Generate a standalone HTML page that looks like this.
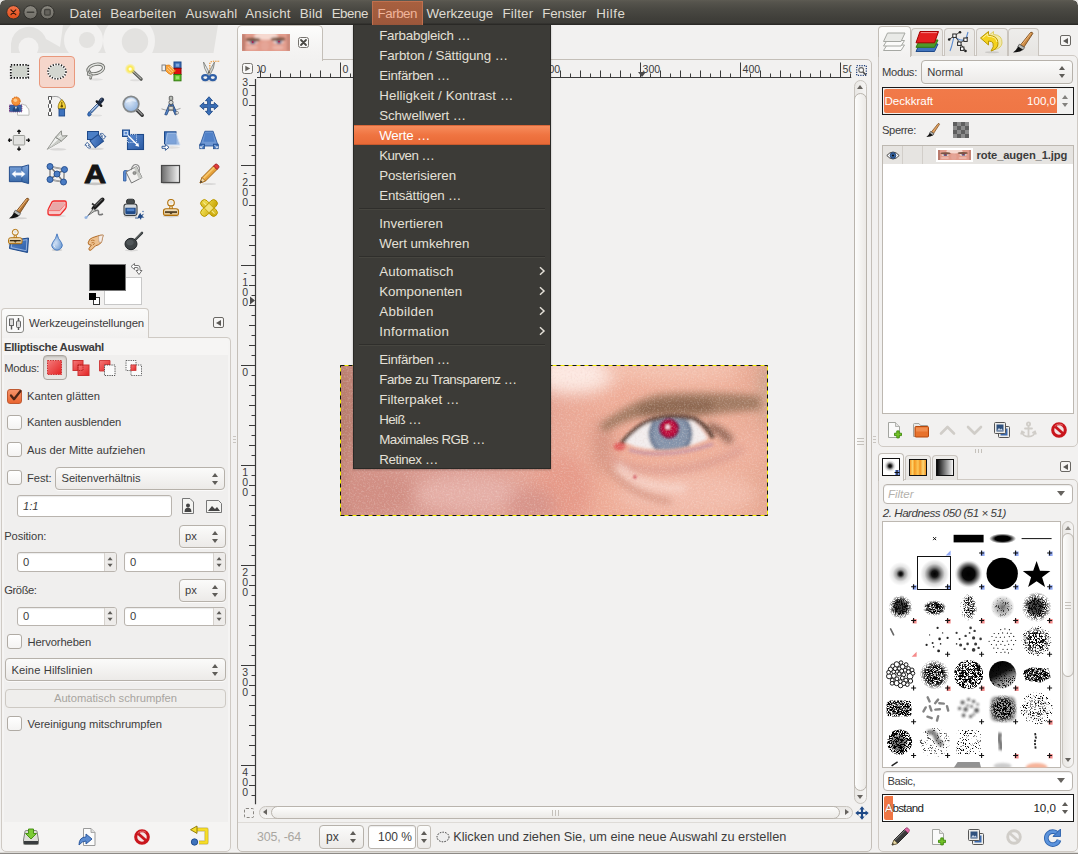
<!DOCTYPE html>
<html lang="de">
<head>
<meta charset="utf-8">
<title>GIMP – rote_augen_1.jpg</title>
<style>
*{box-sizing:border-box;margin:0;padding:0}
html,body{width:1078px;height:854px;overflow:hidden;background:#f2f1f0}
body{position:relative;font-family:"Liberation Sans","DejaVu Sans",sans-serif;font-size:11.2px;color:#3c3c3c;-webkit-font-smoothing:antialiased}
.a{position:absolute}
.t{position:absolute;white-space:nowrap;line-height:16px;height:16px}
.m{position:absolute;white-space:nowrap;font-size:13.33px;line-height:18px;height:18px;color:#dfdbd2}
svg{position:absolute;overflow:visible}
.combo{position:absolute;border:1px solid #b6b1aa;border-radius:4px;background:linear-gradient(#fbfbfa,#eceae8);box-shadow:0 1px 0 rgba(255,255,255,.7)}
.entry{position:absolute;border:1px solid #b9b4ae;border-radius:3px;background:#fff;box-shadow:inset 0 1px 1px rgba(0,0,0,.08)}
.cb{position:absolute;width:15px;height:15px;border:1px solid #b0aba4;border-radius:3px;background:linear-gradient(#fff,#f4f3f2)}
.mb{position:absolute;width:11px;height:11px;border:1px solid #6a6864;border-radius:2px;background:#f6f5f4}
.mb:after{content:"";position:absolute;left:2px;top:1.5px;border-right:5px solid #5a5855;border-top:3px solid transparent;border-bottom:3px solid transparent}
.ud:before,.ud:after{content:"";position:absolute;left:0;border-left:3.5px solid transparent;border-right:3.5px solid transparent}
.ud:before{top:0;border-bottom:4px solid #5e5c58}
.ud:after{top:8px;border-top:4px solid #5e5c58}
.ud{position:absolute;width:7px;height:12px}
.tab{position:absolute;border:1px solid #c9c4be;border-bottom:none;border-radius:4px 4px 0 0;background:linear-gradient(#eeedeb,#e6e4e1)}
.tab.on{background:linear-gradient(#fbfbfa,#f2f1f0);border-color:#c2bdb6}
</style>
</head>
<body>
<!-- title / menu bar -->
<div class="a" id="titlebar" style="left:0;top:0;width:1078px;height:25px;background:linear-gradient(#5d5b53 0,#56544d 2px,#4a4943 9px,#403f3a 18px,#3c3b37 23px,#2b2a27 24px,#2b2a27 25px);border-radius:5px 5px 0 0"></div>
<div class="a" style="left:0;top:0;width:5px;height:5px;background:radial-gradient(circle at 5px 5px,transparent 4.3px,#e6e5e3 5.2px)"></div>
<div class="a" style="left:1073px;top:0;width:5px;height:5px;background:radial-gradient(circle at 0 5px,transparent 4.3px,#e6e5e3 5.2px)"></div>
<svg style="left:4px;top:4px" width="56" height="18" viewBox="0 0 56 18">
  <defs>
    <linearGradient id="gclose" x1="0" y1="0" x2="0" y2="1"><stop offset="0" stop-color="#f4744a"/><stop offset="1" stop-color="#df4d19"/></linearGradient>
    <linearGradient id="gbtn" x1="0" y1="0" x2="0" y2="1"><stop offset="0" stop-color="#8a8880"/><stop offset="1" stop-color="#706e67"/></linearGradient>
  </defs>
  <circle cx="9.400" cy="8.300" r="6.700" fill="url(#gclose)" stroke="#33302b" stroke-width="1"/>
  <path d="M7 5.900 L11.800 10.700 M11.800 5.900 L7 10.700" stroke="#3d1a0c" stroke-width="1.200" stroke-linecap="round"/>
  <circle cx="26.500" cy="8.300" r="6.700" fill="url(#gbtn)" stroke="#2f2e2a" stroke-width="1"/>
  <path d="M23.300 8.300 H29.700" stroke="#3f3e39" stroke-width="1.500" stroke-linecap="round"/>
  <circle cx="43.400" cy="8.300" r="6.700" fill="url(#gbtn)" stroke="#2f2e2a" stroke-width="1"/>
  <rect x="40.600" y="5.500" width="5.600" height="5.600" rx="1" fill="#64625c" stroke="#45443f" stroke-width="1.300"/>
</svg>
<div class="a" style="left:372px;top:1px;width:51px;height:25px;background:linear-gradient(#a8603f,#9c573b);border:1px solid #c0704e"></div>
<span class="m" id="m0" style="left:69.6px;top:5px;letter-spacing:0.12px">Datei</span>
<span class="m" id="m1" style="left:110.2px;top:5px;letter-spacing:0.17px">Bearbeiten</span>
<span class="m" id="m2" style="left:185.4px;top:5px;letter-spacing:0.25px">Auswahl</span>
<span class="m" id="m3" style="left:245.2px;top:5px;letter-spacing:0.28px">Ansicht</span>
<span class="m" id="m4" style="left:299.8px;top:5px;letter-spacing:0.16px">Bild</span>
<span class="m" id="m5" style="left:331.7px;top:5px;letter-spacing:-0.46px">Ebene</span>
<span class="m" id="m6" style="left:377.6px;top:5px;color:#f0b49a;letter-spacing:-0.47px">Farben</span>
<span class="m" id="m7" style="left:426.6px;top:5px;letter-spacing:-0.06px">Werkzeuge</span>
<span class="m" id="m8" style="left:502.4px;top:5px;letter-spacing:0.24px">Filter</span>
<span class="m" id="m9" style="left:542.3px;top:5px;letter-spacing:-0.21px">Fenster</span>
<span class="m" id="m10" style="left:596.2px;top:5px;letter-spacing:0.51px">Hilfe</span>
<!-- toolbox: wilber strip -->
<svg style="left:11px;top:25px" width="207" height="28" viewBox="11 25 207 28">
  <defs><clipPath id="wclip"><path d="M11 25 H218 L213.5 53 H11 Z"/></clipPath></defs>
  <g clip-path="url(#wclip)">
    <path d="M11 53 V46 A18 18 0 0 1 46 39 L60 47 L63 25 H218 V53 Z" fill="#e3e2e0"/>
    <circle cx="28.5" cy="47.5" r="10" fill="#f2f1f0"/>
    <circle cx="83.5" cy="40" r="19.5" fill="#f2f1f0"/>
    <circle cx="87" cy="40" r="8" fill="#e3e2e0"/>
    <circle cx="129" cy="41" r="26" fill="#f2f1f0"/>
    <circle cx="135" cy="41.5" r="13.2" fill="#e3e2e0"/>
  </g>
</svg>
<!-- selected tool highlight -->
<div class="a" style="left:39px;top:56px;width:36px;height:32px;border:1px solid #e9987c;border-radius:4px;background:#f5d6cb"></div>
<!-- tool icons -->
<svg width="0" height="0" style="left:0;top:0"><defs>
<linearGradient id="gBlue" x1="0" y1="0" x2="1" y2="1"><stop offset="0" stop-color="#5b8bd0"/><stop offset="1" stop-color="#2a5aa3"/></linearGradient>
<linearGradient id="gBlueV" x1="0" y1="0" x2="0" y2="1"><stop offset="0" stop-color="#7ba3db"/><stop offset="1" stop-color="#3465a4"/></linearGradient>
<linearGradient id="gGrey" x1="0" y1="0" x2="1" y2="1"><stop offset="0" stop-color="#eeeeec"/><stop offset="1" stop-color="#a5a7a2"/></linearGradient>
<linearGradient id="gBlend" x1="0" y1="0" x2="1" y2="0"><stop offset="0" stop-color="#6a6a6a"/><stop offset="1" stop-color="#f4f4f4"/></linearGradient>
<linearGradient id="gWood" x1="0" y1="0" x2="1" y2="1"><stop offset="0" stop-color="#d9934a"/><stop offset="1" stop-color="#8f5a22"/></linearGradient>
<linearGradient id="gPink" x1="0" y1="0" x2="0" y2="1"><stop offset="0" stop-color="#f9b9b9"/><stop offset="1" stop-color="#ee8a8a"/></linearGradient>
<radialGradient id="gLens" cx="40%" cy="35%" r="70%"><stop offset="0" stop-color="#dbe7f6"/><stop offset="1" stop-color="#8fb2de"/></radialGradient>
<radialGradient id="gDrop" cx="40%" cy="55%" r="60%"><stop offset="0" stop-color="#cfe0f5"/><stop offset="1" stop-color="#6f9bd1"/></radialGradient>
<radialGradient id="gGlow" cx="50%" cy="50%" r="50%"><stop offset="0" stop-color="#fff9b0"/><stop offset=".45" stop-color="#fce94f"/><stop offset="1" stop-color="#fce94f" stop-opacity="0"/></radialGradient>
<linearGradient id="gYel" x1="0" y1="0" x2="1" y2="1"><stop offset="0" stop-color="#f5e35a"/><stop offset="1" stop-color="#c4a000"/></linearGradient>
<linearGradient id="gTan" x1="0" y1="0" x2="0" y2="1"><stop offset="0" stop-color="#f5e6c8"/><stop offset="1" stop-color="#d9b980"/></linearGradient>
<filter id="fsh" x="-30%" y="-30%" width="160%" height="160%"><feGaussianBlur stdDeviation="0.9"/></filter>
</defs></svg>

<svg style="left:7.0px;top:59.0px" width="24" height="24" viewBox="0 0 24 24"><rect x="4" y="6" width="17" height="12.500" fill="#cfd3cc"/><rect x="3.800" y="5.800" width="17.400" height="13" fill="none" stroke="#fff" stroke-width="1.800"/><rect x="3.800" y="5.800" width="17.400" height="13" fill="none" stroke="#111" stroke-width="1.800" stroke-dasharray="1.450 1.450"/></svg>
<svg style="left:44.5px;top:59.0px" width="24" height="24" viewBox="0 0 24 24"><ellipse cx="12" cy="12.600" rx="8.600" ry="6.800" fill="#d3d6d0"/><ellipse cx="12" cy="12.600" rx="9" ry="7.200" fill="none" stroke="#fff" stroke-width="1.900"/><ellipse cx="12" cy="12.600" rx="9" ry="7.200" fill="none" stroke="#222" stroke-width="1.700" stroke-dasharray="1.300 1.500"/></svg>
<svg style="left:82.7px;top:59.0px" width="24" height="24" viewBox="0 0 24 24"><g transform="rotate(-14 12.5 10)"><ellipse cx="12.800" cy="10" rx="8" ry="4.600" fill="none" stroke="#6f716c" stroke-width="3.200"/><ellipse cx="12.800" cy="10" rx="8" ry="4.600" fill="none" stroke="#e3e4e1" stroke-width="1.400"/></g><path d="M6.500 12.500 L5.200 15.500 L8.300 15.800 L7.600 19.300" fill="none" stroke="#6f716c" stroke-width="2.600" stroke-linejoin="round" stroke-linecap="round"/><path d="M6.500 12.500 L5.200 15.500 L8.300 15.800 L7.600 19.300" fill="none" stroke="#dcddda" stroke-width="1" stroke-linejoin="round"/><ellipse cx="13" cy="20.500" rx="7" ry="1.200" fill="#000" opacity=".07"/></svg>
<svg style="left:121.0px;top:59.0px" width="24" height="24" viewBox="0 0 24 24"><path d="M11 11.500 L20.200 20.200" stroke="#4a4c48" stroke-width="3" stroke-linecap="round"/><path d="M11 11.300 L20 19.800" stroke="#a9aba6" stroke-width="1.200" stroke-linecap="round"/><circle cx="9.200" cy="10" r="5.600" fill="url(#gGlow)"/><circle cx="9.200" cy="10" r="1.500" fill="#fffde0"/><ellipse cx="15" cy="21.300" rx="6" ry="1" fill="#000" opacity=".08"/></svg>
<svg style="left:159.0px;top:59.0px" width="24" height="24" viewBox="0 0 24 24"><rect x="15" y="3" width="7" height="6.300" fill="#3b6fb8" stroke="#1e4a8a" stroke-width="1"/><rect x="16.800" y="4.700" width="3.400" height="3" fill="#7ea6dc"/><rect x="15" y="9.300" width="7" height="6.200" fill="#dd1111" stroke="#8f0000" stroke-width="1"/><rect x="15" y="15.500" width="7" height="6.300" fill="#66c92e" stroke="#2f7a0c" stroke-width="1"/><rect x="16.800" y="17.200" width="3.400" height="3" fill="#9be56e"/><path d="M6.500 6.500 L10.500 6 L16.500 12 L12 15.500 L9.500 14.500 L6.500 11.500 Z" fill="#f9a33a" stroke="#e07a0a" stroke-width=".8"/><path d="M9 8 l5 5 M8 10 l4 4 M11 7 l4 4" stroke="#fcd9a0" stroke-width=".7"/><rect x="3" y="6" width="3.400" height="5.800" fill="#f4f4f4" stroke="#777" stroke-width=".9"/></svg>
<svg style="left:196.8px;top:59.0px" width="24" height="24" viewBox="0 0 24 24"><path d="M12.800 12 V5 Q13 2.500 16 2.200 H23" fill="none" stroke="#e98a1a" stroke-width="1.100" stroke-dasharray="1.300 1"/><path d="M6.500 3 Q9.500 8 12.800 14.500 L10.800 15.500 Q6.500 9 6.500 3 Z" fill="#e6e7e4" stroke="#777974" stroke-width=".8"/><path d="M17.500 3 Q14.500 8 11.200 14.500 L13.200 15.500 Q17.500 9 17.500 3 Z" fill="#cfd1cc" stroke="#777974" stroke-width=".8"/><circle cx="12" cy="13.200" r=".9" fill="#555"/><ellipse cx="8.300" cy="18.600" rx="3.100" ry="2.500" fill="none" stroke="#2f5fa6" stroke-width="2.200"/><ellipse cx="15.800" cy="18.600" rx="3.100" ry="2.500" fill="none" stroke="#2f5fa6" stroke-width="2.200"/><ellipse cx="12" cy="22.300" rx="7.500" ry=".9" fill="#000" opacity=".08"/></svg>
<svg style="left:7.0px;top:93.5px" width="24" height="24" viewBox="0 0 24 24"><path d="M10.500 14 Q10.500 10.800 13.500 10.800 Q15 9.300 17 10.800 Q19.800 10.500 20 13.500 Q22.200 14 22 17 V21.200 H10.500 Z" fill="#fdfdfd" stroke="#b5b7b2" stroke-width=".9"/><rect x="2.500" y="11" width="12.300" height="6.800" fill="#3465a4" stroke="#75307a" stroke-width="1" stroke-dasharray="1.100 .8"/><path d="M5.500 17.500 q0 -5 3.400 -5 q3.400 0 3.400 5 z" fill="#23477d"/><path d="M7.800 12.800 l1.100 2.600 l1.100 -2.600 z" fill="#e6e6e6"/><circle cx="9" cy="7.200" r="4.200" fill="#f5923a" stroke="#ce5c00" stroke-width="1" stroke-dasharray="1.200 .7"/><circle cx="8.400" cy="6.300" r="1.800" fill="#fcc98a"/></svg>
<svg style="left:44.5px;top:93.5px" width="24" height="24" viewBox="0 0 24 24"><path d="M6 3 C12 1.5 16 3 17 8" fill="none" stroke="#999" stroke-width="1"/><path d="M3.5 2.5 h3 v3 l-1 1 v3 l1 1 v3 l-1 1 v3 l1 1 v3 h-3 v-3 l1 -1 v-3 l-1 -1 v-3 l1 -1 v-3 l-1 -1 z" fill="#fff" stroke="#444" stroke-width=".9"/><path d="M16.8 5.5 C20 9 21 12 20 15 H13.6 C12.6 12 13.6 9 16.8 5.5 Z" fill="#f4d23a" stroke="#8a6d00" stroke-width=".9"/><path d="M16.8 8 V13" stroke="#6b5200" stroke-width=".9"/><circle cx="16.8" cy="12.3" r="1.2" fill="#6b5200"/><rect x="14" y="15" width="5.6" height="7" fill="#3f73bd" stroke="#1f4a8a" stroke-width=".9"/></svg>
<svg style="left:82.7px;top:93.5px" width="24" height="24" viewBox="0 0 24 24"><path d="M7 17.300 L15 9 L16.600 10.600 L8.600 18.900 Z" fill="#6c97cf" stroke="#23477d" stroke-width=".9"/><path d="M8.600 16.800 L15 10.200" stroke="#e6eefa" stroke-width=".9"/><path d="M13.800 7.400 L18.200 11.800" stroke="#1b1b1b" stroke-width="2.400" stroke-linecap="round"/><path d="M16.200 9 L19 5.600" stroke="#1d2b42" stroke-width="4.200" stroke-linecap="round"/><path d="M17.300 6.300 L18.700 4.800" stroke="#51648a" stroke-width="1.200" stroke-linecap="round"/><path d="M6.200 17.600 q-2.600 2.800 -1 4.300 q1.800 1.200 3.200 -1.800 z" fill="#3b73c2" stroke="#1d4684" stroke-width=".7"/><ellipse cx="13" cy="21.500" rx="6" ry="1" fill="#000" opacity=".07"/></svg>
<svg style="left:121.0px;top:93.5px" width="24" height="24" viewBox="0 0 24 24"><g transform="translate(12 12) scale(0.97) translate(-12 -12)"><path d="M15.5 15.5 L21.5 21.5" stroke="#3b3b3b" stroke-width="3.6" stroke-linecap="round"/><path d="M16 15.6 L21.3 20.9" stroke="#9a9a9a" stroke-width="1.2" stroke-linecap="round"/><circle cx="10" cy="10" r="8" fill="url(#gLens)" stroke="#84888a" stroke-width="1.8"/><path d="M4.5 9 a5.6 5.6 0 0 1 10.8 -1.2 q-5.5 -1.8 -10.8 1.2z" fill="#fff" opacity=".55"/></g></svg>
<svg style="left:159.0px;top:93.5px" width="24" height="24" viewBox="0 0 24 24"><g transform="translate(12 12) scale(0.95) translate(-12 -12)"><path d="M2 15 Q12 19 22 14.5" fill="none" stroke="#888" stroke-width=".8"/><path d="M12 5.5 L5.5 21 L7.5 21.5 L12.6 10 Z" fill="#5b8bd0" stroke="#23477d" stroke-width=".9"/><path d="M12 5.5 L18.5 20 L16.5 21.5 L11.4 10 Z" fill="#3f73bd" stroke="#23477d" stroke-width=".9"/><rect x="10.2" y="1.8" width="3.6" height="4.2" rx=".8" fill="#b9bdb6" stroke="#555" stroke-width=".9"/><circle cx="12" cy="8.3" r="2.2" fill="#d9dbd6" stroke="#555" stroke-width=".9"/><rect x="9.6" y="12.3" width="4.8" height="3.8" rx=".8" fill="#d9dbd6" stroke="#555" stroke-width=".9"/><circle cx="18.4" cy="19.2" r="1.5" fill="#eee" stroke="#666" stroke-width=".7"/></g></svg>
<svg style="left:196.8px;top:93.5px" width="24" height="24" viewBox="0 0 24 24"><g transform="translate(12 12) scale(0.88) translate(-12 -12)"><path d="M12 1.5 L16 6 H13.6 V10.4 H18 V8 L22.5 12 L18 16 V13.6 H13.6 V18 H16 L12 22.5 L8 18 H10.4 V13.6 H6 V16 L1.5 12 L6 8 V10.4 H10.4 V6 H8 Z" fill="#3a6fb7" stroke="#1f4a8a" stroke-width="1" stroke-linejoin="round"/></g></svg>
<svg style="left:7.0px;top:127.5px" width="24" height="24" viewBox="0 0 24 24"><rect x="6.300" y="7.500" width="11.400" height="9.500" rx=".8" fill="#e2e2e0" stroke="#9a9c97" stroke-width="1"/><path d="M12 6 V2.800 M12 18.500 V21.700 M5 12.200 H1.800 M19 12.200 H22.200" stroke="#111" stroke-width="1.300"/><path d="M10.200 3.400 h3.600 M10.200 21.100 h3.600 M2.400 10.400 v3.600 M21.600 10.400 v3.600" stroke="#111" stroke-width="1.300"/><path d="M12 1.200 l1.900 2.400 h-3.800z M12 23.200 l1.900 -2.400 h-3.800z M.7 12.200 l2.400 -1.900 v3.800z M23.300 12.200 l-2.400 -1.900 v3.800z" fill="#111"/></svg>
<svg style="left:44.5px;top:127.5px" width="24" height="24" viewBox="0 0 24 24"><ellipse cx="13" cy="21.300" rx="8.500" ry="1.200" fill="#000" opacity=".1"/><path d="M2.300 21.300 L10.500 9.300 L16.500 13 Z" fill="#f1f2f0" stroke="#8c8e89" stroke-width=".9" stroke-linejoin="round"/><path d="M2.300 21.300 L16.500 13 L13.500 11.200 Z" fill="#c9cbc6"/><path d="M10.500 9.300 L16.300 2.800 L16.800 8 L22.300 7.700 L16.500 13 Z" fill="#d6d8d3" stroke="#80827d" stroke-width=".9" stroke-linejoin="round"/><path d="M13.500 9.500 q2.500 -2.600 3.300 -1.500" fill="none" stroke="#fff" stroke-width="1"/></svg>
<svg style="left:82.7px;top:127.5px" width="24" height="24" viewBox="0 0 24 24"><ellipse cx="13" cy="20.800" rx="8" ry="1.200" fill="#000" opacity=".1"/><rect x="4.500" y="3.500" width="11" height="8" fill="#4b7fc6" stroke="#1f4a8a" stroke-width="1"/><rect x="8.500" y="8.800" width="10.500" height="8.500" fill="url(#gBlue)" stroke="#1f4a8a" stroke-width="1" transform="rotate(-38 13.700 13)"/><path d="M17.200 5.700 a3 3 0 0 1 4.300 2.600 l1.400 0 l-2.300 2.900 l-2.500 -2.900 h1.500 a1.500 1.500 0 0 0 -2.200 -1.200z" fill="#fff" stroke="#1f4a8a" stroke-width=".8"/><path d="M7.600 19.800 a3 3 0 0 1 -4.300 -2.600 l-1.400 0 l2.300 -2.900 l2.500 2.900 h-1.500 a1.500 1.500 0 0 0 2.200 1.200z" fill="#fff" stroke="#1f4a8a" stroke-width=".8"/></svg>
<svg style="left:121.0px;top:127.5px" width="24" height="24" viewBox="0 0 24 24"><rect x="6.5" y="6.5" width="16" height="15" fill="url(#gBlue)" stroke="#1f4a8a" stroke-width="1.1"/><rect x="6.5" y="6.5" width="9" height="8" fill="none" stroke="#c7d9f2" stroke-width=".9" stroke-dasharray="1.2 1"/><rect x="1.5" y="2" width="7" height="6.5" fill="#5b8bd0" stroke="#1f4a8a" stroke-width="1"/><rect x="3.2" y="3.6" width="3.4" height="3.2" fill="none" stroke="#dbe7f6" stroke-width=".8"/><path d="M7 7.5 L16.5 17" stroke="#fff" stroke-width="1.4"/><path d="M18.2 18.7 l-1 -4 l-3 3z" fill="#fff"/></svg>
<svg style="left:159.0px;top:127.5px" width="24" height="24" viewBox="0 0 24 24"><ellipse cx="13" cy="19.500" rx="8" ry="1.200" fill="#000" opacity=".08"/><rect x="5.500" y="3.800" width="11.500" height="12" fill="#3f73bd" stroke="#1f4a8a" stroke-width="1"/><path d="M8.300 5.200 H17.200 L21 17 H6.500 Z" fill="#8db0e0" stroke="#c9dbf3" stroke-width=".9" opacity=".8"/><path d="M3 18.300 h3.400 v-2 l3.600 3 l-3.600 3 v-2 h-3.400z" fill="#fff" stroke="#1f4a8a" stroke-width=".9" stroke-linejoin="round"/></svg>
<svg style="left:196.8px;top:127.5px" width="24" height="24" viewBox="0 0 24 24"><g transform="translate(12 12) scale(0.92) translate(-12 -12)"><path d="M7.5 2.5 H16.5 L22 18.5 H2 Z" fill="#6f98d4" stroke="#2d5aa0" stroke-width="1"/><path d="M8 4 H16 L18 14 H6 Z" fill="#4a7cc4" opacity=".8"/><rect x="2" y="16.5" width="5" height="5" fill="#3f73bd" stroke="#1f4a8a" stroke-width=".8"/><rect x="17" y="16.5" width="5" height="5" fill="#3f73bd" stroke="#1f4a8a" stroke-width=".8"/><path d="M3 20.5 l2.8 -2.8 M3 20.5 v-1.8 M3 20.5 h1.8 M21 20.5 l-2.8 -2.8 M21 20.5 v-1.8 M21 20.5 h-1.8" stroke="#fff" stroke-width=".9" fill="none"/></g></svg>
<svg style="left:7.0px;top:162.0px" width="24" height="24" viewBox="0 0 24 24"><g transform="translate(12 12) scale(0.96) translate(-12 -12)"><path d="M2 4.5 H15 L22 2.5 V22 L15 20 H2 Z" fill="url(#gBlueV)" stroke="#1f4a8a" stroke-width="1"/><path d="M15 4.5 V20" stroke="#1f4a8a" stroke-width=".8"/><path d="M4.5 12 l4 -3.3 v2.1 h6 v-2.1 l4 3.3 l-4 3.3 v-2.1 h-6 v2.1z" fill="#fff" stroke="#c7d9f2" stroke-width=".5"/></g></svg>
<svg style="left:44.5px;top:162.0px" width="24" height="24" viewBox="0 0 24 24"><path d="M5 4.5 L19.5 7.5 L18.5 20 L5 17.5 Z M5 4.5 L12 12 L19.5 7.5 M5 17.5 L12 12 L18.5 20" fill="none" stroke="#777" stroke-width="1.6"/><path d="M5 4.5 L19.5 7.5 L18.5 20 L5 17.5 Z" fill="none" stroke="#ddd" stroke-width=".6"/><g fill="#4a7cc4" stroke="#1f4a8a" stroke-width=".9"><circle cx="5" cy="4.5" r="3"/><circle cx="19.5" cy="7.5" r="3"/><circle cx="12" cy="12" r="3"/><circle cx="5" cy="17.5" r="3"/><circle cx="18.5" cy="20" r="3"/></g></svg>
<svg style="left:82.7px;top:162.0px" width="24" height="24" viewBox="0 0 24 24"><ellipse cx="12" cy="21.800" rx="10.500" ry="1.400" fill="#000" opacity=".18"/><g transform="translate(12 0) scale(1.160 1) translate(-12 0)"><text x="12" y="21" text-anchor="middle" font-family="Liberation Sans,DejaVu Sans,sans-serif" font-weight="bold" font-size="26.500" fill="#151515" stroke="#151515" stroke-width=".9">A</text></g></svg>
<svg style="left:121.0px;top:162.0px" width="24" height="24" viewBox="0 0 24 24"><path d="M2.5 19 V10 Q2.5 8 5 8.5 L9 9.5 V12 L5 11 V19 Z" fill="#5b8bd0" stroke="#2d5aa0" stroke-width=".8"/><path d="M5 10 L15.5 4.5 L21 15.5 L10.5 21 Z" fill="#f2f2f0" stroke="#777" stroke-width="1"/><path d="M15.5 4.5 L21 15.5 L18 17 L13 6 Z" fill="#c9cbc6"/><path d="M10 8 Q12 1 16.5 3 Q19.5 5 17.8 10" fill="none" stroke="#888" stroke-width="1.1"/><circle cx="13.5" cy="11" r="1.6" fill="#9a9c97" stroke="#666" stroke-width=".6"/></svg>
<svg style="left:159.0px;top:162.0px" width="24" height="24" viewBox="0 0 24 24"><rect x="2.5" y="3.5" width="18" height="17" fill="url(#gBlend)" stroke="#4a4a4a" stroke-width="1.2"/><rect x="3.5" y="21" width="17" height="1.2" fill="#000" opacity=".15"/></svg>
<svg style="left:196.8px;top:162.0px" width="24" height="24" viewBox="0 0 24 24"><path d="M3 21 L5 15.5 L16.5 4 L20 7.5 L8.5 19 Z" fill="#e6a13a" stroke="#9b5d0f" stroke-width=".9"/><path d="M6 15.5 L17.3 4.3 L18.5 5.6 L7 17 Z" fill="#f7c66a"/><path d="M3 21 L5 15.5 L8.5 19 Z" fill="#f0d7a8" stroke="#9b5d0f" stroke-width=".7"/><path d="M3 21 L3.9 18.6 L5.4 20.1 Z" fill="#333"/><path d="M16.5 4 L18.2 2.3 Q19.3 1.5 20.6 2.7 L21.4 3.5 Q22.5 4.8 21.7 5.8 L20 7.5 Z" fill="#e23b3b" stroke="#8f0f0f" stroke-width=".8"/><ellipse cx="12" cy="22" rx="7" ry="1" fill="#000" opacity=".1"/></svg>
<svg style="left:7.0px;top:195.5px" width="24" height="24" viewBox="0 0 24 24"><path d="M9.5 15 L19.5 2.5 Q21.5 1.5 21.8 3.5 L13 17 Z" fill="url(#gWood)" stroke="#6e3f10" stroke-width=".8"/><path d="M11 14.5 L20 3.2" stroke="#f1b877" stroke-width="1"/><path d="M8.3 14.2 L13.6 17.6 L11.8 20 L6.8 16.8 Z" fill="#b9bbb6" stroke="#555" stroke-width=".8"/><path d="M7 16.5 L12 19.8 Q9 22.5 2 22.5 Q5.5 20 7 16.5 Z" fill="#111"/><ellipse cx="12" cy="22.3" rx="8" ry="1" fill="#000" opacity=".12"/></svg>
<svg style="left:44.5px;top:195.5px" width="24" height="24" viewBox="0 0 24 24"><ellipse cx="13" cy="20" rx="8" ry="1.200" fill="#000" opacity=".08"/><path d="M3 15.500 Q2.700 13.800 3.600 12.500 L6.800 6.200 Q7.500 5 9 5 H19.700 Q21.200 5 21.200 6.500 V10.500 Q21.200 12 20.200 13 L15.800 18.200 Q15 19 13.800 19 H5 Q3 19 3 17.200 Z" fill="#f8c9c9" stroke="#ef2929" stroke-width="1.300" stroke-linejoin="round"/><path d="M4.200 14.300 L7.600 6.800 Q7.900 6.200 8.800 6.200 H19.200 Q20 6.200 19.800 7 L15 14.500 Z" fill="#e9a7a7"/><path d="M3.800 14.600 H14.800 L20.300 8" fill="none" stroke="#f26a6a" stroke-width=".9"/></svg>
<svg style="left:82.7px;top:195.5px" width="24" height="24" viewBox="0 0 24 24"><path d="M10.5 12.5 L19.5 3.5" stroke="#1b1b1b" stroke-width="4" stroke-linecap="round"/><path d="M12 10 L19 3" stroke="#6a6a6a" stroke-width="1.1" stroke-linecap="round"/><path d="M5 19.5 L10.5 12.5 L12.5 14.5 Z" fill="#c9cbc6" stroke="#555" stroke-width=".8"/><path d="M9 7.5 L13 10.5" stroke="#333" stroke-width="1.6"/><path d="M12 15 Q16 13 15.5 17 Q15 20 20 18" fill="none" stroke="#777" stroke-width="1.6"/><path d="M2 22.5 L5 19 L5.8 19.8 Z" fill="#5b8bd0"/><circle cx="3" cy="21.5" r="1.6" fill="#7ba3db" opacity=".7"/></svg>
<svg style="left:121.0px;top:195.5px" width="24" height="24" viewBox="0 0 24 24"><ellipse cx="9.500" cy="20.300" rx="7" ry="1.200" fill="#000" opacity=".12"/><rect x="5.500" y="3.200" width="8" height="5" rx="2" fill="#43484a" stroke="#2a2d2e" stroke-width=".9"/><path d="M3 10.500 Q3 8 5.500 8 H13.500 Q16 8 16 10.500 V17 Q16 19.500 13.500 19.500 H5.500 Q3 19.500 3 17 Z" fill="#d6dadd" stroke="#3b3f41" stroke-width="1.100"/><path d="M4.300 11.800 H14.700 V16.800 Q14.700 18.300 13.200 18.300 H5.800 Q4.300 18.300 4.300 16.800 Z" fill="#204a87"/><rect x="5.800" y="12.600" width="7.500" height="2.600" fill="#4f82c8"/><path d="M17.500 19.500 l1.800 -2.800 l.9 2.400 l3 -1.600 l-2 2.600 l2.200 1.400 l-3 .3 l-.4 2.200 l-1.400 -2 l-2.700 .8 z" fill="#204a87"/><circle cx="15" cy="22" r=".8" fill="#204a87"/><circle cx="22" cy="15.500" r=".7" fill="#3465a4"/></svg>
<svg style="left:159.0px;top:195.5px" width="24" height="24" viewBox="0 0 24 24"><ellipse cx="12" cy="20.300" rx="8" ry="1.100" fill="#000" opacity=".12"/><circle cx="12" cy="6.800" r="3.300" fill="#fbf6e8" stroke="#b06f0a" stroke-width="1.100"/><circle cx="12" cy="6.300" r="1.500" fill="#ddd" opacity=".8"/><path d="M11 10 H13 L13.600 13 H10.400 Z" fill="#f3e3bb" stroke="#b06f0a" stroke-width=".9"/><path d="M4.500 15 Q4.500 12.800 7 12.800 H17 Q19.500 12.800 19.500 15 V17.800 Q19.500 19.400 18 19.400 H6 Q4.500 19.400 4.500 17.800 Z" fill="url(#gTan)" stroke="#b06f0a" stroke-width="1.100"/><rect x="6" y="15.300" width="12" height="1.500" fill="#3a2a10"/><path d="M10.300 16.800 h3.400 l-1.700 1.500z" fill="#3a2a10"/></svg>
<svg style="left:196.8px;top:195.5px" width="24" height="24" viewBox="0 0 24 24"><g transform="translate(12 12) scale(0.93) translate(-12 -12)"><g stroke="#b89600" stroke-width="1"><rect x="1" y="8" width="22" height="8" rx="4" fill="url(#gYel)" transform="rotate(45 12 12)"/><rect x="1" y="8" width="22" height="8" rx="4" fill="url(#gYel)" transform="rotate(-45 12 12)"/></g><rect x="8.4" y="8.4" width="7.2" height="7.2" fill="#f2e27a" stroke="#b89600" stroke-width=".7" transform="rotate(45 12 12)"/><path d="M6 6 L9 9 M15 15 L18 18" stroke="#fff4a8" stroke-width="1.2" opacity=".8"/></g></svg>
<svg style="left:7.0px;top:230.0px" width="24" height="24" viewBox="0 0 24 24"><path d="M3.500 10.500 L21.500 8 L20.500 22.500 L2.500 18.500 Z" fill="url(#gBlue)" stroke="#1f4a8a" stroke-width="1" stroke-linejoin="round"/><path d="M5 11.800 L20 9.700 L19.200 20.700 L4.200 17.500 Z" fill="none" stroke="#a9c3ea" stroke-width=".8"/><g transform="translate(-2.500,-3.800) scale(.9)"><ellipse cx="12" cy="20.300" rx="8" ry="1.100" fill="#000" opacity=".12"/><circle cx="12" cy="6.800" r="3.300" fill="#fbf6e8" stroke="#b06f0a" stroke-width="1.100"/><circle cx="12" cy="6.300" r="1.500" fill="#ddd" opacity=".8"/><path d="M11 10 H13 L13.600 13 H10.400 Z" fill="#f3e3bb" stroke="#b06f0a" stroke-width=".9"/><path d="M4.500 15 Q4.500 12.800 7 12.800 H17 Q19.500 12.800 19.500 15 V17.800 Q19.500 19.400 18 19.400 H6 Q4.500 19.400 4.500 17.800 Z" fill="url(#gTan)" stroke="#b06f0a" stroke-width="1.100"/><rect x="6" y="15.300" width="12" height="1.500" fill="#3a2a10"/><path d="M10.300 16.800 h3.400 l-1.700 1.500z" fill="#3a2a10"/></g></svg>
<svg style="left:44.5px;top:230.0px" width="24" height="24" viewBox="0 0 24 24"><g transform="translate(12 12) scale(0.86) translate(-12 -12)"><ellipse cx="12" cy="21.3" rx="6" ry="1.2" fill="#000" opacity=".15"/><path d="M12 2.5 Q13 8 17 12.5 Q19.5 16 17 19 Q14.5 21.5 12 21.5 Q9.5 21.5 7 19 Q4.5 16 7 12.5 Q11 8 12 2.5 Z" fill="url(#gDrop)" stroke="#3f73bd" stroke-width="1"/><path d="M8.5 14 q-.8 3 1.5 4.5" fill="none" stroke="#fff" stroke-width="1.1" opacity=".8"/></g></svg>
<svg style="left:82.7px;top:230.0px" width="24" height="24" viewBox="0 0 24 24"><g transform="translate(12 12) scale(0.86) translate(-12 -12)"><path d="M4 13 Q5 8 9 7 L15 5 Q19 3.5 21.5 4 L19.5 12.5 Q16 16 12.5 16.5 L8 21 Q6 22.5 5 21 Q4.3 20 6 18 L7.8 15.5 Q4 16 4 13 Z" fill="#edc08e" stroke="#a65a0e" stroke-width="1"/><path d="M16 5 L21.5 4 L19.5 12.5 L16.5 12 Z" fill="#f5ece6" stroke="#b58a6a" stroke-width=".6"/><path d="M7.5 10.5 q2 -1.5 4 0 M8 13 q2 -1 3.5 .5 M9.5 15.5 l2 -1.5" fill="none" stroke="#a65a0e" stroke-width=".8"/></g></svg>
<svg style="left:121.0px;top:230.0px" width="24" height="24" viewBox="0 0 24 24"><ellipse cx="10.500" cy="20.300" rx="6.500" ry="1.100" fill="#000" opacity=".1"/><path d="M12.500 11.500 L21 2.800" stroke="#2e3436" stroke-width="2.400" stroke-linecap="round"/><path d="M13.500 10 L21 2.400" stroke="#9a9c98" stroke-width=".7"/><ellipse cx="10" cy="14" rx="6" ry="5.700" fill="#3f4446" stroke="#23272a" stroke-width="1"/><ellipse cx="9" cy="12.600" rx="3.600" ry="2.800" fill="#5a6062" opacity=".7"/></svg>
<!-- fg/bg colours -->
<div class="a" style="left:104px;top:277px;width:38px;height:28px;background:#fff;border:1px solid #c8c8c8"></div>
<div class="a" style="left:89px;top:264px;width:37px;height:27px;background:#000;border:1px solid #777"></div>
<div class="a" style="left:93px;top:297px;width:7px;height:8px;background:#fff;border:1px solid #333"></div>
<div class="a" style="left:89px;top:293px;width:7px;height:7px;background:#000"></div>
<svg style="left:129px;top:262px" width="14" height="14" viewBox="0 0 14 14"><path d="M2 4.5 L5.5 1.5 V3.5 H9 Q11 3.5 11 6 V8.5 H13 L10 12.5 L7 8.5 H9 V6 Q9 5.5 8.5 5.5 H5.5 V7.5 Z" fill="#fbfbfb" stroke="#666" stroke-width=".9" stroke-linejoin="round"/></svg>

<!-- tool options dock -->
<div class="a" style="left:1px;top:337px;width:230px;height:515px;border:1px solid #cfcac4;border-radius:0 4px 5px 5px;background:#f5f4f3"></div>
<div class="a" style="left:4px;top:339px;width:224px;height:483px;background:#f0efee"></div>
<div class="a" style="left:4px;top:339px;width:224px;height:16px;background:#f6f5f4"></div>
<div class="tab on" style="left:1px;top:308px;width:148px;height:30px;border-color:#cfcac4"></div>
<svg style="left:6px;top:315px" width="18" height="18" viewBox="0 0 18 18"><rect x=".5" y=".5" width="17" height="17" rx="2.5" fill="#fafafa" stroke="#8a8a86"/><rect x="3.5" y="4" width="4" height="6.5" fill="#ddd" stroke="#555" stroke-width=".9"/><rect x="4.8" y="10.5" width="1.4" height="4" fill="#555"/><rect x="10.5" y="6" width="4" height="6.5" rx="1" fill="#ddd" stroke="#555" stroke-width=".9"/><rect x="11.8" y="3" width="1.4" height="3" fill="#555"/><rect x="11.8" y="12.5" width="1.4" height="2.5" fill="#555"/></svg>
<span class="t" id="to_title" style="left:29.0px;top:315px;font-size:11.4px;letter-spacing:-0.15px">Werkzeugeinstellungen</span>
<div class="mb" style="left:213px;top:317px"></div>

<span class="t" id="to_name" style="left:4.0px;top:339px;font-weight:bold;font-size:11.4px;letter-spacing:-0.35px">Elliptische Auswahl</span>
<span class="t" id="to_modus" style="left:4.2px;top:360px;letter-spacing:-0.3px">Modus:</span>
<div class="a" style="left:43px;top:355px;width:24px;height:25px;border:1px solid #aaa59e;border-radius:4px;background:linear-gradient(#dddad6,#e9e7e4);box-shadow:inset 0 1px 2px rgba(0,0,0,.15)"></div>
<svg style="left:46px;top:359px" width="96" height="18" viewBox="0 0 96 18">
  <defs><linearGradient id="gRed" x1="0" y1="0" x2="1" y2="1"><stop offset="0" stop-color="#f47b7b"/><stop offset="1" stop-color="#e32222"/></linearGradient></defs>
  <rect x="1.5" y="1.5" width="14" height="14" fill="url(#gRed)" stroke="#c33" stroke-width="1" stroke-dasharray="1.5 1"/>
  <rect x="27" y="1.5" width="10" height="10" fill="url(#gRed)" stroke="#c33" stroke-width="1"/><rect x="32" y="6" width="11" height="10.5" fill="url(#gRed)" stroke="#c33" stroke-width="1"/><rect x="32" y="6" width="5" height="5.5" fill="none" stroke="#a11" stroke-width=".8" stroke-dasharray="1.2 1"/>
  <path d="M53.5 1.5 H64 V6 H58.5 V12 H53.5 Z" fill="url(#gRed)" stroke="#c33" stroke-width=".9"/><rect x="58.5" y="6" width="10.5" height="10.5" fill="#fafafa" stroke="#444" stroke-width=".9" stroke-dasharray="1.3 1"/>
  <rect x="80" y="1.5" width="10" height="10" fill="#fafafa" stroke="#555" stroke-width=".9" stroke-dasharray="1.3 1"/><rect x="85" y="6" width="10.5" height="10.5" fill="#fafafa" stroke="#555" stroke-width=".9" stroke-dasharray="1.3 1"/><rect x="85" y="6" width="5" height="5.5" fill="url(#gRed)" stroke="#c33" stroke-width=".8"/>
</svg>

<div class="cb" style="left:7px;top:389px;border-color:#bf5a32;background:linear-gradient(#f6936a,#e9652f)"></div>
<svg style="left:8px;top:386px" width="16" height="17" viewBox="0 0 16 17"><path d="M3 9.500 L6 13.200 L12.500 5" fill="none" stroke="#4d2415" stroke-width="2.300" stroke-linecap="round" stroke-linejoin="round"/></svg>
<span class="t" id="to_c1" style="left:27.0px;top:388px;letter-spacing:0.07px">Kanten glätten</span>
<div class="cb" style="left:7px;top:415px"></div>
<span class="t" id="to_c2" style="left:27.0px;top:414px;letter-spacing:-0.14px">Kanten ausblenden</span>
<div class="cb" style="left:7px;top:442px"></div>
<span class="t" id="to_c3" style="left:27.0px;top:442px;letter-spacing:0.03px">Aus der Mitte aufziehen</span>
<div class="cb" style="left:7px;top:470px"></div>
<span class="t" id="to_c4" style="left:27.0px;top:470px;letter-spacing:-0.07px">Fest:</span>
<div class="combo" style="left:55px;top:467px;width:170px;height:23px"></div>
<span class="t" id="to_sv" style="left:61.5px;top:470px;letter-spacing:-0.04px">Seitenverhältnis</span>
<div class="ud" style="left:212px;top:473px"></div>

<div class="entry" style="left:17px;top:495px;width:155px;height:22px"></div>
<span class="t" id="to_11" style="left:23px;top:498px;font-style:italic">1:1</span>
<svg style="left:181px;top:497px" width="42" height="18" viewBox="0 0 42 18">
  <path d="M1.5 1.5 H9 L12.5 5 V16.5 H1.5 Z" fill="#f4f4f2" stroke="#777" stroke-width="1"/><circle cx="7" cy="8.5" r="2" fill="#444"/><path d="M3.5 15 q0 -4.5 3.5 -4.5 q3.5 0 3.5 4.5z" fill="#444"/>
  <path d="M25.5 3.5 H37.5 L40.5 6.5 V15.5 H25.5 Z" fill="#f4f4f2" stroke="#777" stroke-width="1"/><path d="M27 14 l4 -5 l3 3 l2 -2 l3 4z" fill="#444"/>
</svg>

<span class="t" id="to_pos" style="left:4.2px;top:528px;letter-spacing:-0.09px">Position:</span>
<div class="combo" style="left:179px;top:525px;width:47px;height:23px"></div>
<span class="t" style="left:185px;top:528px">px</span>
<div class="ud" style="left:212px;top:531px"></div>

<div class="entry" style="left:17px;top:552px;width:100px;height:20px"></div>
<div class="a" style="left:104px;top:553px;width:12px;height:18px;background:#eeecea;border-left:1px solid #d6d2cd;border-radius:0 2px 2px 0"></div>
<div class="ud" style="left:107px;top:556px;transform:scale(.85)"></div>
<span class="t" style="left:23px;top:554px">0</span>
<div class="entry" style="left:124px;top:552px;width:102px;height:20px"></div>
<div class="a" style="left:213px;top:553px;width:12px;height:18px;background:#eeecea;border-left:1px solid #d6d2cd;border-radius:0 2px 2px 0"></div>
<div class="ud" style="left:216px;top:556px;transform:scale(.85)"></div>
<span class="t" style="left:130px;top:554px">0</span>

<span class="t" id="to_gr" style="left:4.3px;top:582px;letter-spacing:-0.43px">Größe:</span>
<div class="combo" style="left:179px;top:579px;width:47px;height:23px"></div>
<span class="t" style="left:185px;top:582px">px</span>
<div class="ud" style="left:212px;top:585px"></div>

<div class="entry" style="left:17px;top:607px;width:100px;height:19px"></div>
<div class="a" style="left:104px;top:608px;width:12px;height:17px;background:#eeecea;border-left:1px solid #d6d2cd;border-radius:0 2px 2px 0"></div>
<div class="ud" style="left:107px;top:610px;transform:scale(.85)"></div>
<span class="t" style="left:23px;top:608px">0</span>
<div class="entry" style="left:124px;top:607px;width:102px;height:19px"></div>
<div class="a" style="left:213px;top:608px;width:12px;height:17px;background:#eeecea;border-left:1px solid #d6d2cd;border-radius:0 2px 2px 0"></div>
<div class="ud" style="left:216px;top:610px;transform:scale(.85)"></div>
<span class="t" style="left:130px;top:608px">0</span>

<div class="cb" style="left:7px;top:634px"></div>
<span class="t" id="to_hv" style="left:27.4px;top:634px;letter-spacing:-0.09px">Hervorheben</span>
<div class="combo" style="left:5px;top:658px;width:221px;height:23px"></div>
<span class="t" id="to_kh" style="left:11.4px;top:662px;letter-spacing:0.1px">Keine Hilfslinien</span>
<div class="ud" style="left:212px;top:664px"></div>
<div class="a" style="left:5px;top:689px;width:221px;height:19px;border:1px solid #cdc9c3;border-radius:4px;background:#efeeec"></div>
<span class="t" id="to_as" style="left:5px;top:690px;width:221px;text-align:center;color:#a8a5a0">Automatisch schrumpfen</span>
<div class="cb" style="left:7px;top:716px"></div>
<span class="t" id="to_vm" style="left:27.4px;top:716px;letter-spacing:-0.04px">Vereinigung mitschrumpfen</span>

<!-- bottom icons -->
<svg style="left:22px;top:828px" width="18" height="18" viewBox="0 0 18 18"><path d="M1.500 12 L3 3.500 Q3.200 2.500 4.200 2.500 H13.800 Q14.800 2.500 15 3.500 L16.500 12 V15.500 Q16.500 16.500 15.500 16.500 H2.500 Q1.500 16.500 1.500 15.500 Z" fill="#deded9" stroke="#7d7f7a" stroke-width="1"/><rect x="2" y="13" width="14" height="3" fill="#3a3d3f"/><path d="M6.500 1 h5 v4.500 h3 l-5.500 5.500 l-5.500 -5.500 h3z" fill="#7ccb35" stroke="#3d8a0a" stroke-width=".9" stroke-linejoin="round"/></svg>
<svg style="left:77px;top:827px" width="20" height="20" viewBox="0 0 20 20"><path d="M6.5 1.5 H14 L18 5.5 V18.5 H6.5 Z" fill="#fbfbfb" stroke="#9a9a9a" stroke-width="1"/><path d="M14 1.5 V5.5 H18" fill="#ddd" stroke="#9a9a9a" stroke-width=".8"/><path d="M2 18 Q2 10 9 10 V7 L15 12 L9 17 V14 Q5 14 2 18 Z" fill="#5b8bd0" stroke="#2d5aa0" stroke-width="1" stroke-linejoin="round"/></svg>
<svg style="left:133px;top:828px" width="18" height="18" viewBox="0 0 20 20"><circle cx="10" cy="10" r="7" fill="#f4e4e4" stroke="#c9161d" stroke-width="3.4"/><path d="M5 5.5 L15 14.5" stroke="#c9161d" stroke-width="3.2"/><path d="M5.3 6 a6.5 6.5 0 0 1 9 -1.2" fill="none" stroke="#f08a8a" stroke-width="1" opacity=".8"/></svg>
<svg style="left:189px;top:826px" width="21" height="21" viewBox="0 0 21 21"><path d="M8 3.5 H17.5 V16.5 H10" fill="none" stroke="#e8c600" stroke-width="3.2" stroke-linejoin="round"/><path d="M8 3.5 H17.5 V16.5 H10" fill="none" stroke="#8a7400" stroke-width="4.4" stroke-linejoin="round" opacity=".35"/><path d="M8 3.5 H17.5 V16.5 H10" fill="none" stroke="#f6dd2a" stroke-width="2.6" stroke-linejoin="round"/><path d="M1.5 3.7 L8 0 V7.4 Z" fill="#f6dd2a" stroke="#8a7400" stroke-width=".9" stroke-linejoin="round"/><circle cx="5.5" cy="16" r="3.2" fill="#3f73bd" stroke="#1f4a8a" stroke-width=".9"/></svg>
<!-- canvas window -->
<div class="a" style="left:233px;top:436px;width:3px;height:7px;background:repeating-linear-gradient(#c9c5c0 0 1px,transparent 1px 3px)"></div>
<div class="a" style="left:237px;top:59px;width:635px;height:793px;border:1px solid #c4bfb8;border-radius:0 5px 5px 5px;background:#f2f1f0"></div>
<div class="a" style="left:237px;top:25px;width:86px;height:36px;border:1px solid #c4bfb8;border-bottom:none;border-radius:5px 5px 0 0;background:linear-gradient(#fdfdfc,#f5f4f3 60%,#f2f1f0)"></div>
<svg style="left:242px;top:34px" width="48" height="17" viewBox="0 0 48 17"><defs><filter id="tb" x="-10%" y="-10%" width="120%" height="120%"><feGaussianBlur stdDeviation=".800"/></filter><clipPath id="tc"><rect width="48" height="17"/></clipPath></defs><g clip-path="url(#tc)" id="thumbg"><rect width="48" height="17" fill="#e29c8c"/><g filter="url(#tb)"><ellipse cx="24" cy="2" rx="12" ry="4" fill="#f6d9d0"/><rect x="0" y="0" width="3" height="17" fill="#b97a6c"/><rect x="45" y="0" width="3" height="17" fill="#c58577"/><ellipse cx="10.500" cy="8.600" rx="5.200" ry="1.700" fill="#e9dcdc"/><ellipse cx="36.500" cy="8.200" rx="5.200" ry="1.700" fill="#e9dcdc"/><ellipse cx="10.700" cy="8.300" rx="2.700" ry="2" fill="#66688a"/><ellipse cx="37" cy="7.900" rx="2.700" ry="2" fill="#66688a"/><ellipse cx="11" cy="5.700" rx="7.500" ry="1.900" fill="#7c5644"/><ellipse cx="36" cy="5.200" rx="7.500" ry="1.900" fill="#7c5644"/><ellipse cx="10" cy="13.5" rx="6" ry="2" fill="#ecb5a8"/><ellipse cx="36" cy="13.5" rx="6" ry="2" fill="#ecb5a8"/><ellipse cx="23" cy="12" rx="4" ry="5" fill="#e5a597"/></g><circle cx="10.700" cy="8" r=".9" fill="#b01848"/><circle cx="37" cy="7.600" r=".9" fill="#b01848"/></g></svg>
<svg style="left:298px;top:37px" width="11" height="11" viewBox="0 0 11 11"><rect x=".5" y=".5" width="10" height="10" rx="2" fill="#f8f8f7" stroke="#77746f"/><path d="M3 3 L8 8 M8 3 L3 8" stroke="#4a4844" stroke-width="1.8" stroke-linecap="round"/></svg>
<svg style="left:242px;top:63px" width="11" height="11" viewBox="0 0 11 11"><rect x=".5" y=".5" width="10" height="10" rx="2" fill="#f8f8f7" stroke="#77746f"/><path d="M3.3 2.8 L8.2 5.5 L3.3 8.2 Z" fill="#66635f"/></svg>
<svg style="left:257px;top:61px" width="595" height="18" viewBox="257 61 595 18"><defs><clipPath id="hrc"><rect x="257" y="61" width="594.5" height="18"/></clipPath></defs><g clip-path="url(#hrc)"><path d="M257 77.5 H851.5" stroke="#3a3a3a" stroke-width="1.2"/><path d="M260.5 70.5 V77.5 M270.5 73.5 V77.5 M280.5 70.5 V77.5 M290.5 73.5 V77.5 M300.5 70.5 V77.5 M310.5 73.5 V77.5 M320.5 70.5 V77.5 M330.5 73.5 V77.5 M340.5 62.5 V77.5 M350.5 73.5 V77.5 M360.5 70.5 V77.5 M370.5 73.5 V77.5 M380.5 70.5 V77.5 M390.5 73.5 V77.5 M400.5 70.5 V77.5 M410.5 73.5 V77.5 M420.5 70.5 V77.5 M430.5 73.5 V77.5 M440.5 62.5 V77.5 M450.5 73.5 V77.5 M460.5 70.5 V77.5 M470.5 73.5 V77.5 M480.5 70.5 V77.5 M490.5 73.5 V77.5 M500.5 70.5 V77.5 M510.5 73.5 V77.5 M520.5 70.5 V77.5 M530.5 73.5 V77.5 M540.5 62.5 V77.5 M550.5 73.5 V77.5 M560.5 70.5 V77.5 M570.5 73.5 V77.5 M580.5 70.5 V77.5 M590.5 73.5 V77.5 M600.5 70.5 V77.5 M610.5 73.5 V77.5 M620.5 70.5 V77.5 M630.5 73.5 V77.5 M640.5 62.5 V77.5 M650.5 73.5 V77.5 M660.5 70.5 V77.5 M670.5 73.5 V77.5 M680.5 70.5 V77.5 M690.5 73.5 V77.5 M700.5 70.5 V77.5 M710.5 73.5 V77.5 M720.5 70.5 V77.5 M730.5 73.5 V77.5 M740.5 62.5 V77.5 M750.5 73.5 V77.5 M760.5 70.5 V77.5 M770.5 73.5 V77.5 M780.5 70.5 V77.5 M790.5 73.5 V77.5 M800.5 70.5 V77.5 M810.5 73.5 V77.5 M820.5 70.5 V77.5 M830.5 73.5 V77.5 M840.5 62.5 V77.5 M850.5 73.5 V77.5" stroke="#3a3a3a" stroke-width="1"/><text x="245.0" y="72.800" font-size="10.600" font-family="Liberation Sans,DejaVu Sans,sans-serif" fill="#3c3c3c">-100</text><text x="342.5" y="72.800" font-size="10.600" font-family="Liberation Sans,DejaVu Sans,sans-serif" fill="#3c3c3c">0</text><text x="442.5" y="72.800" font-size="10.600" font-family="Liberation Sans,DejaVu Sans,sans-serif" fill="#3c3c3c">100</text><text x="542.5" y="72.800" font-size="10.600" font-family="Liberation Sans,DejaVu Sans,sans-serif" fill="#3c3c3c">200</text><text x="642.5" y="72.800" font-size="10.600" font-family="Liberation Sans,DejaVu Sans,sans-serif" fill="#3c3c3c">300</text><text x="742.5" y="72.800" font-size="10.600" font-family="Liberation Sans,DejaVu Sans,sans-serif" fill="#3c3c3c">400</text><text x="842.5" y="72.800" font-size="10.600" font-family="Liberation Sans,DejaVu Sans,sans-serif" fill="#3c3c3c">500</text><path d="M638 72 H646 L642 77 Z" fill="#4a4a4a"/></g></svg>
<svg style="left:241px;top:79px" width="16" height="726" viewBox="241 79 16 726"><defs><clipPath id="vrc"><rect x="241" y="77.500" width="16" height="727"/></clipPath></defs><g clip-path="url(#vrc)"><path d="M255.5 79 V804.5" stroke="#3a3a3a" stroke-width="1.2"/><path d="M249 85.5 H255.5 M251.5 95.5 H255.5 M249 105.5 H255.5 M251.5 115.5 H255.5 M249 125.5 H255.5 M251.5 135.5 H255.5 M249 145.5 H255.5 M251.5 155.5 H255.5 M241 165.5 H255.5 M251.5 175.5 H255.5 M249 185.5 H255.5 M251.5 195.5 H255.5 M249 205.5 H255.5 M251.5 215.5 H255.5 M249 225.5 H255.5 M251.5 235.5 H255.5 M249 245.5 H255.5 M251.5 255.5 H255.5 M241 265.5 H255.5 M251.5 275.5 H255.5 M249 285.5 H255.5 M251.5 295.5 H255.5 M249 305.5 H255.5 M251.5 315.5 H255.5 M249 325.5 H255.5 M251.5 335.5 H255.5 M249 345.5 H255.5 M251.5 355.5 H255.5 M241 365.5 H255.5 M251.5 375.5 H255.5 M249 385.5 H255.5 M251.5 395.5 H255.5 M249 405.5 H255.5 M251.5 415.5 H255.5 M249 425.5 H255.5 M251.5 435.5 H255.5 M249 445.5 H255.5 M251.5 455.5 H255.5 M241 465.5 H255.5 M251.5 475.5 H255.5 M249 485.5 H255.5 M251.5 495.5 H255.5 M249 505.5 H255.5 M251.5 515.5 H255.5 M249 525.5 H255.5 M251.5 535.5 H255.5 M249 545.5 H255.5 M251.5 555.5 H255.5 M241 565.5 H255.5 M251.5 575.5 H255.5 M249 585.5 H255.5 M251.5 595.5 H255.5 M249 605.5 H255.5 M251.5 615.5 H255.5 M249 625.5 H255.5 M251.5 635.5 H255.5 M249 645.5 H255.5 M251.5 655.5 H255.5 M241 665.5 H255.5 M251.5 675.5 H255.5 M249 685.5 H255.5 M251.5 695.5 H255.5 M249 705.5 H255.5 M251.5 715.5 H255.5 M249 725.5 H255.5 M251.5 735.5 H255.5 M249 745.5 H255.5 M251.5 755.5 H255.5 M241 765.5 H255.5 M251.5 775.5 H255.5 M249 785.5 H255.5 M251.5 795.5 H255.5" stroke="#3a3a3a" stroke-width="1"/><text x="245.2" y="75.5" text-anchor="middle" font-size="10.5" font-family="Liberation Sans,DejaVu Sans,sans-serif" fill="#3c3c3c">-</text><text x="245.2" y="85.5" text-anchor="middle" font-size="10.5" font-family="Liberation Sans,DejaVu Sans,sans-serif" fill="#3c3c3c">3</text><text x="245.2" y="95.5" text-anchor="middle" font-size="10.5" font-family="Liberation Sans,DejaVu Sans,sans-serif" fill="#3c3c3c">0</text><text x="245.2" y="105.5" text-anchor="middle" font-size="10.5" font-family="Liberation Sans,DejaVu Sans,sans-serif" fill="#3c3c3c">0</text><text x="245.2" y="175.5" text-anchor="middle" font-size="10.5" font-family="Liberation Sans,DejaVu Sans,sans-serif" fill="#3c3c3c">-</text><text x="245.2" y="185.5" text-anchor="middle" font-size="10.5" font-family="Liberation Sans,DejaVu Sans,sans-serif" fill="#3c3c3c">2</text><text x="245.2" y="195.5" text-anchor="middle" font-size="10.5" font-family="Liberation Sans,DejaVu Sans,sans-serif" fill="#3c3c3c">0</text><text x="245.2" y="205.5" text-anchor="middle" font-size="10.5" font-family="Liberation Sans,DejaVu Sans,sans-serif" fill="#3c3c3c">0</text><text x="245.2" y="275.5" text-anchor="middle" font-size="10.5" font-family="Liberation Sans,DejaVu Sans,sans-serif" fill="#3c3c3c">-</text><text x="245.2" y="285.5" text-anchor="middle" font-size="10.5" font-family="Liberation Sans,DejaVu Sans,sans-serif" fill="#3c3c3c">1</text><text x="245.2" y="295.5" text-anchor="middle" font-size="10.5" font-family="Liberation Sans,DejaVu Sans,sans-serif" fill="#3c3c3c">0</text><text x="245.2" y="305.5" text-anchor="middle" font-size="10.5" font-family="Liberation Sans,DejaVu Sans,sans-serif" fill="#3c3c3c">0</text><text x="245.2" y="375.5" text-anchor="middle" font-size="10.5" font-family="Liberation Sans,DejaVu Sans,sans-serif" fill="#3c3c3c">0</text><text x="245.2" y="475.5" text-anchor="middle" font-size="10.5" font-family="Liberation Sans,DejaVu Sans,sans-serif" fill="#3c3c3c">1</text><text x="245.2" y="485.5" text-anchor="middle" font-size="10.5" font-family="Liberation Sans,DejaVu Sans,sans-serif" fill="#3c3c3c">0</text><text x="245.2" y="495.5" text-anchor="middle" font-size="10.5" font-family="Liberation Sans,DejaVu Sans,sans-serif" fill="#3c3c3c">0</text><text x="245.2" y="575.5" text-anchor="middle" font-size="10.5" font-family="Liberation Sans,DejaVu Sans,sans-serif" fill="#3c3c3c">2</text><text x="245.2" y="585.5" text-anchor="middle" font-size="10.5" font-family="Liberation Sans,DejaVu Sans,sans-serif" fill="#3c3c3c">0</text><text x="245.2" y="595.5" text-anchor="middle" font-size="10.5" font-family="Liberation Sans,DejaVu Sans,sans-serif" fill="#3c3c3c">0</text><text x="245.2" y="675.5" text-anchor="middle" font-size="10.5" font-family="Liberation Sans,DejaVu Sans,sans-serif" fill="#3c3c3c">3</text><text x="245.2" y="685.5" text-anchor="middle" font-size="10.5" font-family="Liberation Sans,DejaVu Sans,sans-serif" fill="#3c3c3c">0</text><text x="245.2" y="695.5" text-anchor="middle" font-size="10.5" font-family="Liberation Sans,DejaVu Sans,sans-serif" fill="#3c3c3c">0</text><text x="245.2" y="775.5" text-anchor="middle" font-size="10.5" font-family="Liberation Sans,DejaVu Sans,sans-serif" fill="#3c3c3c">4</text><text x="245.2" y="785.5" text-anchor="middle" font-size="10.5" font-family="Liberation Sans,DejaVu Sans,sans-serif" fill="#3c3c3c">0</text><text x="245.2" y="795.5" text-anchor="middle" font-size="10.5" font-family="Liberation Sans,DejaVu Sans,sans-serif" fill="#3c3c3c">0</text><path d="M250 296.5 V304.5 L255 300.5 Z" fill="#4a4a4a"/></g></svg>
<svg style="left:856px;top:65px" width="11" height="11" viewBox="0 0 11 11"><rect x=".7" y=".7" width="9.6" height="9.6" fill="none" stroke="#1f3f7a" stroke-width="1.2" stroke-dasharray="1.2 1.2"/><circle cx="5.2" cy="5" r="2.4" fill="#f8f8f8" stroke="#666" stroke-width="1.1"/><path d="M7 7 L10 10" stroke="#444" stroke-width="1.6"/></svg>
<div class="a" style="left:854px;top:80px;width:13px;height:724px;border:1px solid #c9c5bf;border-radius:7px;background:linear-gradient(90deg,#e9e7e4,#f6f5f4)"></div>
<div class="a" style="left:854px;top:93px;width:13px;height:698px;border:1px solid #b9b4ad;border-radius:7px;background:linear-gradient(90deg,#fdfdfc,#ebe9e6)"></div>
<div class="a" style="left:857px;top:85px;border-left:3.5px solid transparent;border-right:3.5px solid transparent;border-bottom:4px solid #66635f"></div>
<div class="a" style="left:857px;top:795px;border-left:3.5px solid transparent;border-right:3.5px solid transparent;border-top:4px solid #66635f"></div>
<div class="a" style="left:857px;top:438px;width:7px;height:7px;background:repeating-linear-gradient(#c5c1bb 0 1px,transparent 1px 3px)"></div>
<div class="a" style="left:259px;top:806px;width:594px;height:13px;border:1px solid #c9c5bf;border-radius:7px;background:linear-gradient(#e9e7e4,#f6f5f4)"></div>
<div class="a" style="left:271px;top:806px;width:569px;height:13px;border:1px solid #b9b4ad;border-radius:7px;background:linear-gradient(#fdfdfc,#ebe9e6)"></div>
<div class="a" style="left:263px;top:809px;border-top:3.5px solid transparent;border-bottom:3.5px solid transparent;border-right:4px solid #66635f"></div>
<div class="a" style="left:845px;top:809px;border-top:3.5px solid transparent;border-bottom:3.5px solid transparent;border-left:4px solid #66635f"></div>
<div class="a" style="left:552px;top:810px;width:7px;height:6px;background:repeating-linear-gradient(90deg,#c5c1bb 0 1px,transparent 1px 3px)"></div>
<div class="a" style="left:244px;top:808px;width:10px;height:10px;border:1px dashed #8a8782;border-radius:2px"></div>
<svg style="left:855px;top:806px" width="14" height="14" viewBox="0 0 24 24"><path d="M12 0.5 L16.5 6 H13.8 V10.2 H18 V7.5 L23.5 12 L18 16.5 V13.8 H13.8 V18 H16.5 L12 23.5 L7.5 18 H10.2 V13.8 H6 V16.5 L0.5 12 L6 7.5 V10.2 H10.2 V6 H7.5 Z" fill="#204a87"/></svg>
<div class="a" style="left:238px;top:822px;width:633px;height:1px;background:#dedbd7"></div>
<span class="t" id="st_xy" style="left:257.1px;top:829px;font-size:12.4px;color:#a9a6a1;letter-spacing:-0.2px">305, -64</span>
<div class="combo" style="left:319px;top:825px;width:45px;height:24px"></div>
<span class="t" style="left:326px;top:829px;font-size:12px">px</span>
<div class="ud" style="left:350px;top:831px"></div>
<div class="entry" style="left:368px;top:825px;width:48px;height:24px"></div>
<span class="t" id="st_zoom" style="left:368px;top:829px;width:44px;text-align:right;font-size:12px">100 %</span>
<div class="a" style="left:417px;top:825px;width:14px;height:24px;border:1px solid #c2bdb6;border-radius:3px;background:linear-gradient(#fbfbfa,#eceae8)"></div>
<div class="ud" style="left:420.5px;top:831px"></div>
<svg style="left:436px;top:831px" width="14" height="12" viewBox="0 0 14 12"><ellipse cx="7" cy="6" rx="6" ry="4.8" fill="#eee" stroke="#333" stroke-width="1" stroke-dasharray="1.5 1.2"/></svg>
<span class="t" id="st_msg" style="left:453.2px;top:829px;font-size:12.75px;letter-spacing:-0.0px">Klicken und ziehen Sie, um eine neue Auswahl zu erstellen</span>
<!-- image on canvas -->
<svg style="left:341px;top:366px" width="427" height="151" viewBox="0 0 427 151">
  <defs>
    <filter id="b8" x="-30%" y="-30%" width="160%" height="160%"><feGaussianBlur stdDeviation="8"/></filter>
    <filter id="b4" x="-30%" y="-30%" width="160%" height="160%"><feGaussianBlur stdDeviation="3.5"/></filter>
    <filter id="b2" x="-30%" y="-30%" width="160%" height="160%"><feGaussianBlur stdDeviation="1.5"/></filter>
    <filter id="b1" x="-30%" y="-30%" width="160%" height="160%"><feGaussianBlur stdDeviation=".8"/></filter>
    <filter id="grain" x="0" y="0" width="100%" height="100%"><feTurbulence type="fractalNoise" baseFrequency=".6" numOctaves="2" seed="3" result="n"/><feColorMatrix in="n" type="matrix" values="0 0 0 0 1  0 0 0 0 .93  0 0 0 0 .9  1.1 0 0 0 -.5"/></filter>
    <filter id="grain2" x="0" y="0" width="100%" height="100%"><feTurbulence type="fractalNoise" baseFrequency=".5" numOctaves="2" seed="9" result="n"/><feColorMatrix in="n" type="matrix" values="0 0 0 0 .55  0 0 0 0 .3  0 0 0 0 .25  1.1 0 0 0 -.52"/></filter>
    <clipPath id="imgc"><rect x="0" y="0" width="426" height="149.500"/></clipPath>
    <clipPath id="eyec"><path d="M284 76 Q296 62 310 56 Q332 50 352 55 Q362 62 367 73 Q352 80 338 82 Q318 85 300 82 Q290 80 284 76 Z"/></clipPath>
    <linearGradient id="skin" x1="0" y1="0" x2="1" y2="0"><stop offset="0" stop-color="#c08274"/><stop offset=".035" stop-color="#d4958a"/><stop offset=".3" stop-color="#dd9f95"/><stop offset=".5" stop-color="#e9a796"/><stop offset=".62" stop-color="#efad98"/><stop offset=".9" stop-color="#efb09a"/><stop offset="1" stop-color="#e6a892"/></linearGradient>
  </defs>
  <g clip-path="url(#imgc)">
    <rect width="426" height="150" fill="url(#skin)"/>
    <g filter="url(#b8)">
      <ellipse cx="232" cy="8" rx="44" ry="20" fill="#fde9e2"/>
      <ellipse cx="330" cy="4" rx="70" ry="12" fill="#f5c3b0"/>
      <ellipse cx="222" cy="125" rx="28" ry="36" fill="#e79b8a"/>
      <ellipse cx="345" cy="128" rx="70" ry="22" fill="#f3bdac"/>
      <ellipse cx="125" cy="128" rx="55" ry="18" fill="#e6b0a8"/>
      <ellipse cx="35" cy="128" rx="40" ry="22" fill="#d28f84"/>
      <ellipse cx="190" cy="140" rx="25" ry="18" fill="#d8948a"/>
      <ellipse cx="262" cy="80" rx="9" ry="28" fill="#d39280"/>
      <ellipse cx="402" cy="84" rx="24" ry="22" fill="#efb09c"/>
      <ellipse cx="4" cy="40" rx="8" ry="50" fill="#b47a6a"/>
      <ellipse cx="426" cy="25" rx="4" ry="30" fill="#b4a08c"/>
    </g>
    <g filter="url(#b4)">
      <path d="M258 60 Q284 38 314 29 Q360 24 420 30 L420 44 Q384 46 350 52 Q318 50 296 52 Q276 58 264 66 Z" fill="#a27a62"/>
      <path d="M296 40 Q330 31 372 35 L372 45 Q330 45 300 50 Z" fill="#8c6650"/>
      <path d="M268 92 Q300 110 350 102 Q385 94 402 82" fill="none" stroke="#dc9c90" stroke-width="6"/>
      <path d="M266 100 Q285 128 330 136" fill="none" stroke="#d2927f" stroke-width="5"/>
      <path d="M276 100 Q300 124 345 122" fill="none" stroke="#f7d3c8" stroke-width="8"/>
      <path d="M366 60 Q382 64 390 76" fill="none" stroke="#80594a" stroke-width="7"/>
    </g>
    <g filter="url(#b2)">
      <path d="M280 78 Q294 60 310 54 Q332 47 354 53 Q366 60 372 72" fill="none" stroke="#664a3e" stroke-width="4.500"/>
      <path d="M284 76 Q296 62 310 56 Q332 50 352 55 Q362 62 367 73 Q352 80 338 82 Q318 85 300 82 Q290 80 284 76 Z" fill="#f3eeee"/>
      <g clip-path="url(#eyec)"><circle cx="329.500" cy="68" r="22" fill="#6b7b94"/><circle cx="329.500" cy="68" r="18" fill="#8594ab"/></g>
      <ellipse cx="278.500" cy="80.500" rx="6" ry="4" fill="#e2625e"/>
      <path d="M288 84 Q325 94 372 78" fill="none" stroke="#cf9aa2" stroke-width="3.500"/>
    </g>
    <g filter="url(#b1)">
      <circle cx="328" cy="62.500" r="10" fill="#7c0c3c"/>
      <circle cx="328" cy="62.500" r="8" fill="#bd0f3e"/>
      <circle cx="326.800" cy="61" r="2.200" fill="#fbe6f0"/>
      <circle cx="294" cy="111" r="1.800" fill="#cc4a55"/>
    </g>
    <rect width="426" height="150" filter="url(#grain)" opacity=".55"/>
    <rect width="426" height="150" filter="url(#grain2)" opacity=".25"/>
  </g>
  <rect x="-.5" y="-.5" width="427" height="150" fill="none" stroke="#f4ee00" stroke-width="1"/>
  <rect x="-.5" y="-.5" width="427" height="150" fill="none" stroke="#111" stroke-width="1" stroke-dasharray="4 4"/>
</svg>
<!-- right dock: layers -->
<div class="a" style="left:873px;top:436px;width:3px;height:7px;background:repeating-linear-gradient(#c9c5c0 0 1px,transparent 1px 3px)"></div>
<div class="a" style="left:878px;top:55px;width:200px;height:392px;border:1px solid #cfcac4;border-radius:0 5px 5px 5px;background:#f2f1f0"></div>
<div class="tab" style="left:911px;top:28px;width:32px;height:28px"></div>
<div class="tab" style="left:944px;top:28px;width:31px;height:28px"></div>
<div class="tab" style="left:976px;top:28px;width:32px;height:28px"></div>
<div class="tab" style="left:1008px;top:28px;width:31px;height:28px"></div>
<div class="tab on" style="left:878px;top:26px;width:33px;height:31px"></div>
<div class="mb" style="left:1060px;top:35px"></div>
<!-- tab icons -->
<svg style="left:882px;top:31px" width="24" height="22" viewBox="0 0 24 22"><g stroke="#a6a8a3" stroke-width="1" stroke-linejoin="round"><path d="M1.500 19.500 L5 14 H22.500 L19 19.500 Z" fill="#fbfbfa"/><path d="M1.500 15 L5 9.500 H22.500 L19 15 Z" fill="#fbfbfa"/><path d="M1.500 10.500 L5.500 2 H23 L19 10.500 Z" fill="#e9eae7"/></g></svg>
<svg style="left:915px;top:30px" width="24" height="24" viewBox="0 0 24 24"><g stroke-width="1" stroke-linejoin="round"><path d="M1 21.500 L4.500 14 H23 L19.500 21.500 Z" fill="#3f73bd" stroke="#1f4a8a"/><path d="M1 17.300 L4.500 10 H23 L19.500 17.300 Z" fill="#4e9a2a" stroke="#2f7a0c"/><path d="M1 12.800 L5 1.500 H23.500 L19.500 12.800 Z" fill="#e31f1f" stroke="#a40000"/></g><path d="M5.800 2.600 H22" stroke="#f58a8a" stroke-width="1"/></svg>
<svg style="left:947px;top:30px" width="24" height="24" viewBox="0 0 24 24"><path d="M3 21 C6 14 6 8 7.5 5.5 C10 10 15 11 18.5 9.5 C20 6 20.5 4 21 2" fill="none" stroke="#5b8bd0" stroke-width="1.1"/><path d="M2 9.5 L13 2 M7.500 5.5 L18 20 M12 14 L21 7" stroke="#333" stroke-width=".9"/><g fill="#fff" stroke="#222" stroke-width="1"><rect x="5.8" y="4" width="3.4" height="3.4"/><rect x="16.8" y="8" width="3.4" height="3.4"/><rect x="10.6" y="12" width="3.4" height="3.4"/><rect x="13.5" y="17" width="3.4" height="3.4"/></g><circle cx="13" cy="2.2" r="1.3" fill="#222"/><circle cx="2.2" cy="9.5" r="1.3" fill="#222"/><circle cx="18.5" cy="21" r="1.3" fill="#222"/></svg>
<svg style="left:979px;top:30px" width="25" height="24" viewBox="0 0 25 24"><path d="M9 6 L14.5 1.5 V4.5 Q23.5 5 23 13 Q22.5 18 16 19.5 Q20 15 18 12 Q16.5 10 14.500 10 V13 Z" fill="#f3e9a0" stroke="#d9c64a" stroke-width=".9" opacity=".9"/><path d="M1.500 8 L9.500 1.500 V5.500 Q19 5.500 19 13.500 Q19 19 12 21 Q15.500 16.500 14 13 Q12.800 11 9.500 11 V15 Z" fill="#f4d21f" stroke="#b89600" stroke-width="1" stroke-linejoin="round"/><path d="M3.500 8 L8.800 3.800 V6.300 Q17 6.300 18 12" fill="none" stroke="#fff3a0" stroke-width="1"/><ellipse cx="13" cy="22.300" rx="7" ry="1" fill="#000" opacity=".12"/></svg>
<svg style="left:1011px;top:30px" width="24" height="24" viewBox="0 0 24 24"><path d="M9.500 15 L19.500 2.500 Q21.500 1.500 21.800 3.500 L13 17 Z" fill="#c98a45" stroke="#6e3f10" stroke-width=".8"/><path d="M11 14.500 L20 3.200" stroke="#f1b877" stroke-width="1"/><path d="M8.300 14.200 L13.600 17.600 L11.800 20 L6.800 16.800 Z" fill="#b9bbb6" stroke="#555" stroke-width=".8"/><path d="M7 16.500 L12 19.800 Q9 22.500 2 22.500 Q5.500 20 7 16.500 Z" fill="#111"/></svg>

<span class="t" id="rd_modus" style="left:882.0px;top:64px;letter-spacing:-0.28px">Modus:</span>
<div class="combo" style="left:921px;top:60px;width:152px;height:24px"></div>
<span class="t" id="rd_normal" style="left:927.3px;top:64px;letter-spacing:-0.07px">Normal</span>
<div class="ud" style="left:1059px;top:66px"></div>

<div class="a" style="left:882px;top:87px;width:192px;height:28px;border:1px solid #1a1a1a;background:#f2f1f0"></div>
<div class="a" style="left:884px;top:89px;width:173px;height:24px;background:linear-gradient(#f17a49,#ef7645);border-radius:2px 0 0 2px"></div>
<span class="t" id="rd_deck" style="left:884.5px;top:93px;color:#fff;font-size:11.6px;letter-spacing:-0.05px">Deckkraft</span>
<span class="t" id="rd_100" style="left:1000px;top:93px;width:56px;text-align:right;color:#fff;font-size:11.6px">100,0</span>
<div class="ud" style="left:1062px;top:95px;opacity:.75"></div>

<span class="t" id="rd_sperre" style="left:882.0px;top:122px;letter-spacing:-0.4px">Sperre:</span>
<svg style="left:925px;top:122px" width="16" height="16" viewBox="0 0 24 24"><path d="M9.500 15 L19.500 2.500 Q21.500 1.500 21.800 3.500 L13 17 Z" fill="#e0a060" stroke="#6e3f10" stroke-width="1"/><path d="M8.300 14.200 L13.600 17.600 L11.800 20 L6.800 16.800 Z" fill="#b9bbb6" stroke="#444" stroke-width="1"/><path d="M7 16.500 L12 19.800 Q9 22.500 2 22.500 Q5.500 20 7 16.500 Z" fill="#111"/></svg>
<div class="a" style="left:953px;top:122px;width:16px;height:16px;background:#666 repeating-conic-gradient(#8c8c8c 0 25%,#5f5f5f 0 50%) 0 0/8px 8px"></div>

<div class="a" style="left:882px;top:145px;width:192px;height:269px;border:1px solid #bdb8b1;background:#fff"></div>
<div class="a" style="left:883px;top:146px;width:190px;height:18px;background:#e6e4e1"></div>
<div class="a" style="left:902px;top:146px;width:1px;height:18px;background:#d2cec9"></div>
<div class="a" style="left:922px;top:146px;width:1px;height:18px;background:#d2cec9"></div>
<svg style="left:886px;top:150px" width="14" height="11" viewBox="0 0 14 11"><path d="M.8 5.500 Q7 -1.500 13.200 5.500 Q7 12.500 .8 5.500 Z" fill="#fff" stroke="#333" stroke-width=".9"/><circle cx="7" cy="5.500" r="2.900" fill="#3465a4" stroke="#1b3a6b" stroke-width=".8"/><circle cx="7" cy="5.500" r="1.100" fill="#111"/></svg>
<div class="a" style="left:936px;top:148px;width:37px;height:14px;background:#fff"></div>
<svg style="left:938px;top:150px" width="33" height="10" viewBox="0 0 48 17" preserveAspectRatio="none"><use href="#thumbg"/></svg>
<span class="t" id="rd_layer" style="left:976.5px;top:147px;font-weight:bold;font-size:11.2px;letter-spacing:-0.12px">rote_augen_1.jpg</span>

<!-- layer buttons -->
<svg style="left:886px;top:421px" width="18" height="18" viewBox="0 0 18 18"><path d="M2.500 1.500 H9.500 L13.500 5.500 V16.500 H2.500 Z" fill="#fafafa" stroke="#a3a5a0" stroke-width="1"/><path d="M9.500 1.500 V5.500 H13.500" fill="#e2e2e0" stroke="#a3a5a0" stroke-width=".8"/><path d="M12 10.500 h2.400 v2.300 h2.300 v2.400 h-2.300 v2.300 h-2.400 v-2.300 h-2.300 v-2.400 h2.300z" transform="translate(-1.200,-.6)" fill="#73c228" stroke="#3d8a0a" stroke-width=".9"/></svg>
<svg style="left:912px;top:421px" width="19" height="18" viewBox="0 0 19 18"><path d="M1.500 3.500 Q1.500 2.500 2.500 2.500 H7 L8.500 4.500 H15.500 V15.500 H1.500 Z" fill="#e9e9e7" stroke="#a3a5a0" stroke-width="1"/><rect x="3" y="5.500" width="13.500" height="10.500" rx="1" fill="#e8722c" stroke="#b5480d" stroke-width="1"/><rect x="4" y="6.500" width="11.500" height="4" fill="#f29458" opacity=".8"/></svg>
<svg style="left:939px;top:423px" width="17" height="14" viewBox="0 0 17 14"><path d="M2 10.500 L8.500 4 L15 10.500" fill="none" stroke="#d0cdc8" stroke-width="2.600" stroke-linecap="round" stroke-linejoin="round"/></svg>
<svg style="left:966px;top:423px" width="17" height="14" viewBox="0 0 17 14"><path d="M2 4 L8.500 10.500 L15 4" fill="none" stroke="#d0cdc8" stroke-width="2.600" stroke-linecap="round" stroke-linejoin="round"/></svg>
<svg style="left:993px;top:421px" width="18" height="18" viewBox="0 0 18 18"><rect x="5.500" y="5.500" width="11" height="11" rx="1" fill="#eeeeec" stroke="#555" stroke-width="1"/><rect x="7.500" y="7.500" width="7" height="7" fill="#3b69ad"/><rect x="1.500" y="1.500" width="11" height="11" rx="1" fill="#eeeeec" stroke="#555" stroke-width="1"/><rect x="3.500" y="3.500" width="7" height="7" fill="#30527f"/><path d="M4 9.500 l2 -2.500 l1.500 1.500 l1 -1 l1.500 2z" fill="#c9d6e8"/></svg>
<svg style="left:1020px;top:421px" width="17" height="18" viewBox="0 0 17 18"><g fill="none" stroke="#d0cdc8" stroke-width="1.800" stroke-linecap="round"><circle cx="8.500" cy="3" r="1.600"/><path d="M8.500 5 V15.500 M5 7.500 H12 M2 10.500 Q2.500 15.500 8.500 15.500 Q14.500 15.500 15 10.500 M2 10.500 l-.8 2.200 M2 10.500 l2 1 M15 10.500 l.8 2.200 M15 10.500 l-2 1"/></g></svg>
<svg style="left:1050px;top:421px" width="18" height="18" viewBox="0 0 20 20"><circle cx="10" cy="10" r="7" fill="#f4e4e4" stroke="#c9161d" stroke-width="3.400"/><path d="M5 5.500 L15 14.500" stroke="#c9161d" stroke-width="3.200"/><path d="M5.300 6 a6.500 6.500 0 0 1 9 -1.200" fill="none" stroke="#f08a8a" stroke-width="1" opacity=".8"/></svg>
<!-- right dock: brushes -->
<div class="a" style="left:878px;top:479px;width:200px;height:373px;border:1px solid #cfcac4;border-radius:0 5px 5px 5px;background:#f2f1f0"></div>
<div class="a" style="left:975px;top:449px;width:7px;height:4px;background:repeating-linear-gradient(90deg,#c5c1bb 0 1px,transparent 1px 3px)"></div>
<div class="tab" style="left:905px;top:455px;width:26px;height:25px"></div>
<div class="tab" style="left:932px;top:455px;width:26px;height:25px"></div>
<div class="tab on" style="left:878px;top:453px;width:26px;height:28px"></div>
<div class="mb" style="left:1060px;top:461px"></div>
<svg style="left:882px;top:458px" width="18" height="18" viewBox="0 0 18 18"><defs><radialGradient id="gSoft"><stop offset="0" stop-color="#000"/><stop offset=".22" stop-color="#000" stop-opacity=".92"/><stop offset=".45" stop-color="#000" stop-opacity=".5"/><stop offset=".7" stop-color="#000" stop-opacity=".15"/><stop offset="1" stop-color="#000" stop-opacity="0"/></radialGradient><radialGradient id="gSoft2"><stop offset="0" stop-color="#000"/><stop offset=".14" stop-color="#000" stop-opacity=".9"/><stop offset=".35" stop-color="#000" stop-opacity=".38"/><stop offset=".65" stop-color="#000" stop-opacity=".1"/><stop offset="1" stop-color="#000" stop-opacity="0"/></radialGradient><radialGradient id="gSoft3"><stop offset="0" stop-color="#000"/><stop offset=".45" stop-color="#000" stop-opacity=".97"/><stop offset=".7" stop-color="#000" stop-opacity=".5"/><stop offset=".88" stop-color="#000" stop-opacity=".12"/><stop offset="1" stop-color="#000" stop-opacity="0"/></radialGradient></defs><rect x=".5" y=".5" width="17" height="17" fill="#fff" stroke="#111"/><circle cx="8" cy="8" r="6" fill="url(#gSoft)"/><rect x="13" y="12" width="4.500" height="5" fill="#7f9ff0"/><path d="M12.500 14.500 h5 M15 12 v5" stroke="#111" stroke-width="1.200"/></svg>
<svg style="left:909px;top:459px" width="18" height="17" viewBox="0 0 18 17"><defs><linearGradient id="gPat" x1="0" y1="0" x2="1" y2="0"><stop offset="0" stop-color="#f08a18"/><stop offset=".18" stop-color="#fdd36a"/><stop offset=".3" stop-color="#f49a22"/><stop offset=".5" stop-color="#fcc85a"/><stop offset=".62" stop-color="#f29420"/><stop offset=".8" stop-color="#fdd878"/><stop offset="1" stop-color="#ee8812"/></linearGradient></defs><rect x=".5" y=".5" width="17" height="16" fill="url(#gPat)" stroke="#111"/></svg>
<svg style="left:936px;top:459px" width="18" height="17" viewBox="0 0 18 17"><defs><linearGradient id="gGr" x1="0" y1="0" x2="1" y2="0"><stop offset="0" stop-color="#000"/><stop offset="1" stop-color="#fff"/></linearGradient></defs><rect x=".5" y=".5" width="17" height="16" fill="url(#gGr)" stroke="#111"/></svg>
<div class="entry" style="left:883px;top:484px;width:190px;height:20px;border-radius:4px"></div>
<span class="t" id="br_filter" style="left:888.0px;top:486px;font-style:italic;color:#b4b1ac;font-size:11.6px;letter-spacing:-0.05px">Filter</span>
<div class="a" style="left:1057px;top:491px;border-left:4px solid transparent;border-right:4px solid transparent;border-top:5px solid #66635f"></div>
<span class="t" id="br_name" style="left:882.8px;top:505px;font-style:italic;font-size:11.6px;letter-spacing:-0.48px">2. Hardness 050 (51 × 51)</span>
<div class="a" style="left:882px;top:521px;width:179px;height:247px;border:1px solid #bdb8b1;background:#fff"></div>
<div class="a" style="left:1062px;top:521px;width:12px;height:247px;border:1px solid #c9c5bf;border-radius:6px;background:linear-gradient(90deg,#e9e7e4,#f6f5f4)"></div>
<div class="a" style="left:1062px;top:533px;width:12px;height:144px;border:1px solid #b9b4ad;border-radius:6px;background:linear-gradient(90deg,#fdfdfc,#ebe9e6)"></div>
<div class="a" style="left:1064.5px;top:526px;border-left:3.5px solid transparent;border-right:3.5px solid transparent;border-bottom:4px solid #8a8782"></div>
<div class="a" style="left:1064.5px;top:758px;border-left:3.5px solid transparent;border-right:3.5px solid transparent;border-top:4px solid #66635f"></div>
<div class="a" style="left:1065px;top:602px;width:6px;height:7px;background:repeating-linear-gradient(#c5c1bb 0 1px,transparent 1px 3px)"></div>
<svg style="left:883px;top:522px" width="178" height="246" viewBox="883 522 178 246"><defs>
<clipPath id="bgc"><rect x="883" y="522" width="178" height="245.500"/></clipPath>
<filter id="bl1" x="-30%" y="-30%" width="160%" height="160%"><feGaussianBlur stdDeviation="1.300"/></filter>
<filter id="bl05" x="-30%" y="-30%" width="160%" height="160%"><feGaussianBlur stdDeviation=".600"/></filter>
<filter id="nzA" x="0" y="0" width="100%" height="100%"><feTurbulence type="fractalNoise" baseFrequency=".9" numOctaves="2" seed="2"/><feColorMatrix type="matrix" values="0 0 0 0 0  0 0 0 0 0  0 0 0 0 0  9 0 0 0 -4.200"/><feComposite in2="SourceGraphic" operator="in"/></filter>
<filter id="nzB" x="0" y="0" width="100%" height="100%"><feTurbulence type="fractalNoise" baseFrequency=".7" numOctaves="3" seed="11"/><feColorMatrix type="matrix" values="0 0 0 0 0  0 0 0 0 0  0 0 0 0 0  8 0 0 0 -4.300"/><feComposite in2="SourceGraphic" operator="in"/></filter>
<filter id="nzC" x="0" y="0" width="100%" height="100%"><feTurbulence type="turbulence" baseFrequency=".35" numOctaves="2" seed="5"/><feColorMatrix type="matrix" values="0 0 0 0 0  0 0 0 0 0  0 0 0 0 0  -9 0 0 0 2.400"/><feComposite in2="SourceGraphic" operator="in"/></filter>
<filter id="nzD" x="0" y="0" width="100%" height="100%"><feTurbulence type="fractalNoise" baseFrequency="1.300" numOctaves="1" seed="8"/><feColorMatrix type="matrix" values="0 0 0 0 0  0 0 0 0 0  0 0 0 0 0  10 0 0 0 -5.600"/><feComposite in2="SourceGraphic" operator="in"/></filter>
<filter id="nzE" x="0" y="0" width="100%" height="100%"><feTurbulence type="fractalNoise" baseFrequency=".8" numOctaves="2" seed="21"/><feColorMatrix type="matrix" values="0 0 0 0 0  0 0 0 0 0  0 0 0 0 0  7 0 0 0 -3.100"/><feComposite in2="SourceGraphic" operator="in"/></filter>
<filter id="nzF1" x="0" y="0" width="100%" height="100%"><feTurbulence type="fractalNoise" baseFrequency="1.700" numOctaves="1" seed="4"/><feColorMatrix type="matrix" values="0 0 0 0 0  0 0 0 0 0  0 0 0 0 0  9 0 0 0 -3.900"/><feComposite in2="SourceGraphic" operator="in"/></filter>
<filter id="nzF2" x="0" y="0" width="100%" height="100%"><feTurbulence type="fractalNoise" baseFrequency="1.500" numOctaves="1" seed="14"/><feColorMatrix type="matrix" values="0 0 0 0 0  0 0 0 0 0  0 0 0 0 0  9 0 0 0 -4.600"/><feComposite in2="SourceGraphic" operator="in"/></filter>
<filter id="nzF3" x="0" y="0" width="100%" height="100%"><feTurbulence type="fractalNoise" baseFrequency="1.600" numOctaves="1" seed="23"/><feColorMatrix type="matrix" values="0 0 0 0 0  0 0 0 0 0  0 0 0 0 0  11 0 0 0 -6.500"/><feComposite in2="SourceGraphic" operator="in"/></filter>
<linearGradient id="gSph" x1=".2" y1="0" x2=".7" y2="1"><stop offset="0" stop-color="#000"/><stop offset=".45" stop-color="#111"/><stop offset=".7" stop-color="#888"/><stop offset="1" stop-color="#e8e8e8"/></linearGradient>
<radialGradient id="fo"><stop offset="0" stop-color="#000"/><stop offset=".55" stop-color="#000"/><stop offset="1" stop-color="#000" stop-opacity="0"/></radialGradient>
<radialGradient id="fo2"><stop offset="0" stop-color="#000" stop-opacity=".8"/><stop offset=".3" stop-color="#000" stop-opacity=".5"/><stop offset="1" stop-color="#000" stop-opacity="0"/></radialGradient>
</defs><g clip-path="url(#bgc)"><path d="M933.1 537.125 l3 3 m0 -3 l-3 3" stroke="#111" stroke-width="1"/><path d="M950.6 550.5 V555.5 H945.6 Z" fill="#8fa8f5"/><rect x="953.6" y="534.8" width="30" height="7.600" fill="#000" filter="url(#bl05)"/><rect x="980.6" y="551.5" width="4" height="4.500" fill="#8fa8f5"/><path d="M979.1 553.0 h5 M981.6 550.5 v5" stroke="#111" stroke-width="1.100"/><ellipse cx="1002.6" cy="538.6" rx="13.500" ry="5" fill="url(#fo)"/><rect x="1014.6" y="551.5" width="4" height="4.500" fill="#8fa8f5"/><path d="M1013.1 553.0 h5 M1015.6 550.5 v5" stroke="#111" stroke-width="1.100"/><path d="M1021.6 538.6 h30" stroke="#111" stroke-width="1"/><rect x="1048.6" y="551.5" width="4" height="4.500" fill="#8fa8f5"/><path d="M1047.1 553.0 h5 M1049.6 550.5 v5" stroke="#111" stroke-width="1.100"/><circle cx="900.6" cy="573.9" r="12" fill="url(#gSoft2)"/><rect x="912.6" y="585.2" width="4" height="4.500" fill="#8fa8f5"/><path d="M911.1 586.8 h5 M913.6 584.2 v5" stroke="#111" stroke-width="1.100"/><circle cx="934.6" cy="573.9" r="14.500" fill="url(#gSoft)"/><rect x="946.6" y="585.2" width="4" height="4.500" fill="#8fa8f5"/><path d="M945.1 586.8 h5 M947.6 584.2 v5" stroke="#111" stroke-width="1.100"/><rect x="917.500" y="556.500" width="33" height="33" fill="none" stroke="#111" stroke-width="1"/><circle cx="968.6" cy="573.9" r="14" fill="url(#gSoft3)"/><rect x="980.6" y="585.2" width="4" height="4.500" fill="#8fa8f5"/><path d="M979.1 586.8 h5 M981.6 584.2 v5" stroke="#111" stroke-width="1.100"/><circle cx="1002.2" cy="573.5" r="15.700" fill="#000"/><rect x="1014.6" y="585.2" width="4" height="4.500" fill="#8fa8f5"/><path d="M1013.1 586.8 h5 M1015.6 584.2 v5" stroke="#111" stroke-width="1.100"/><polygon points="1036.6,560.9 1040.0,570.7 1050.4,570.9 1042.1,577.2 1045.1,587.1 1036.6,581.2 1028.1,587.1 1031.1,577.2 1022.8,570.9 1033.2,570.7" fill="#000"/><rect x="1048.6" y="585.2" width="4" height="4.500" fill="#8fa8f5"/><path d="M1047.1 586.8 h5 M1049.6 584.2 v5" stroke="#111" stroke-width="1.100"/><g filter="url(#nzF1)" opacity="1"><circle cx="900.6" cy="607.1" r="12" fill="url(#fo)"/></g><circle cx="900.6" cy="607.1" r="7.500" fill="#111" opacity=".8" filter="url(#bl1)"/><rect x="912.6" y="619.0" width="4" height="4.500" fill="#f58a8a"/><path d="M911.1 620.5 h5 M913.6 618.0 v5" stroke="#111" stroke-width="1.100"/><g filter="url(#nzF1)" opacity="1"><ellipse cx="934.6" cy="608.1" rx="12" ry="8" fill="url(#fo)"/></g><g filter="url(#nzE)" opacity="0.7"><ellipse cx="934.6" cy="608.1" rx="10" ry="6" fill="#000"/></g><rect x="946.6" y="619.0" width="4" height="4.500" fill="#f58a8a"/><path d="M945.1 620.5 h5 M947.6 618.0 v5" stroke="#111" stroke-width="1.100"/><g filter="url(#nzF2)" opacity="1"><ellipse cx="968.6" cy="607.1" rx="9" ry="14" fill="url(#fo)"/></g><g filter="url(#nzE)" opacity="0.7"><ellipse cx="969.6" cy="607.1" rx="5" ry="11" fill="#000"/></g><rect x="980.6" y="619.0" width="4" height="4.500" fill="#f58a8a"/><path d="M979.1 620.5 h5 M981.6 618.0 v5" stroke="#111" stroke-width="1.100"/><circle cx="1002.6" cy="607.1" r="12" fill="url(#fo2)" opacity=".75"/><g filter="url(#nzF3)" opacity="0.7"><circle cx="1002.6" cy="607.1" r="11" fill="url(#fo)"/></g><rect x="1014.6" y="619.0" width="4" height="4.500" fill="#f58a8a"/><path d="M1013.1 620.5 h5 M1015.6 618.0 v5" stroke="#111" stroke-width="1.100"/><g filter="url(#nzF1)" opacity="1"><circle cx="1036.6" cy="607.1" r="15" fill="url(#fo)"/></g><circle cx="1035.6" cy="607.1" r="8.500" fill="#111" opacity=".75" filter="url(#bl1)"/><rect x="1048.6" y="619.0" width="4" height="4.500" fill="#f58a8a"/><path d="M1047.1 620.5 h5 M1049.6 618.0 v5" stroke="#111" stroke-width="1.100"/><path d="M890.6 628.9 l3 6" stroke="#666" stroke-width="1.600" stroke-linecap="round" filter="url(#bl05)"/><path d="M916.6 651.8 V656.8 H911.6 Z" fill="#f58a8a"/><g filter="url(#bl05)"><circle cx="937.6" cy="627.9" r="1.1" fill="#222"/><circle cx="939.6" cy="638.9" r="1.3" fill="#222"/><circle cx="947.6" cy="637.9" r="1.1" fill="#222"/><circle cx="926.6" cy="644.9" r="1.1" fill="#222"/><circle cx="932.6" cy="642.9" r="1" fill="#222"/><circle cx="940.6" cy="643.9" r="0.8" fill="#222"/><circle cx="938.6" cy="650.9" r="1.4" fill="#222"/><circle cx="933.6" cy="646.9" r="0.8" fill="#222"/><circle cx="942.6" cy="632.9" r="0.7" fill="#222"/><circle cx="929.6" cy="634.9" r="0.6" fill="#222"/></g><path d="M945.1 654.2 h5 M947.6 651.8 v5" stroke="#111" stroke-width="1.100"/><g filter="url(#bl05)"><circle cx="970.6" cy="627.9" r="1.3" fill="#222" opacity=".9"/><circle cx="974.6" cy="630.9" r="1.2" fill="#222" opacity=".9"/><circle cx="956.6" cy="632.9" r="1.1" fill="#222" opacity=".9"/><circle cx="965.6" cy="635.9" r="1.2" fill="#222" opacity=".9"/><circle cx="973.6" cy="637.9" r="1.6" fill="#222" opacity=".9"/><circle cx="980.6" cy="638.9" r="1.3" fill="#222" opacity=".9"/><circle cx="959.6" cy="638.9" r="1" fill="#222" opacity=".9"/><circle cx="960.6" cy="644.9" r="1.5" fill="#222" opacity=".9"/><circle cx="967.6" cy="643.9" r="1.3" fill="#222" opacity=".9"/><circle cx="975.6" cy="643.9" r="1.5" fill="#222" opacity=".9"/><circle cx="964.6" cy="648.9" r="1.2" fill="#222" opacity=".9"/><circle cx="973.6" cy="649.9" r="1.8" fill="#222" opacity=".9"/><circle cx="978.6" cy="647.9" r="1.2" fill="#222" opacity=".9"/><circle cx="969.6" cy="632.9" r="0.9" fill="#222" opacity=".9"/><circle cx="956.6" cy="643.9" r="0.8" fill="#222" opacity=".9"/></g><path d="M979.1 654.2 h5 M981.6 651.8 v5" stroke="#111" stroke-width="1.100"/><circle cx="992.0" cy="636.5" r=".62" fill="#111"/><circle cx="989.1" cy="641.3" r=".62" fill="#111"/><circle cx="991.5" cy="644.5" r=".62" fill="#111"/><circle cx="994.2" cy="633.5" r=".62" fill="#111"/><circle cx="996.1" cy="637.3" r=".62" fill="#111"/><circle cx="994.2" cy="640.4" r=".62" fill="#111"/><circle cx="996.4" cy="644.9" r=".62" fill="#111"/><circle cx="993.8" cy="648.1" r=".62" fill="#111"/><circle cx="996.5" cy="652.5" r=".62" fill="#111"/><circle cx="1000.7" cy="629.6" r=".62" fill="#111"/><circle cx="998.6" cy="633.6" r=".62" fill="#111"/><circle cx="1000.3" cy="637.3" r=".62" fill="#111"/><circle cx="998.2" cy="641.4" r=".62" fill="#111"/><circle cx="1000.9" cy="644.3" r=".62" fill="#111"/><circle cx="997.9" cy="648.3" r=".62" fill="#111"/><circle cx="1001.0" cy="652.5" r=".62" fill="#111"/><circle cx="1004.9" cy="628.9" r=".62" fill="#111"/><circle cx="1002.6" cy="632.9" r=".62" fill="#111"/><circle cx="1004.5" cy="637.1" r=".62" fill="#111"/><circle cx="1002.7" cy="641.4" r=".62" fill="#111"/><circle cx="1004.9" cy="645.3" r=".62" fill="#111"/><circle cx="1003.0" cy="649.3" r=".62" fill="#111"/><circle cx="1004.9" cy="652.2" r=".62" fill="#111"/><circle cx="1009.4" cy="629.7" r=".62" fill="#111"/><circle cx="1007.4" cy="633.2" r=".62" fill="#111"/><circle cx="1009.3" cy="636.6" r=".62" fill="#111"/><circle cx="1007.3" cy="641.0" r=".62" fill="#111"/><circle cx="1008.7" cy="644.3" r=".62" fill="#111"/><circle cx="1007.3" cy="649.3" r=".62" fill="#111"/><circle cx="1008.5" cy="652.9" r=".62" fill="#111"/><circle cx="1011.0" cy="633.4" r=".62" fill="#111"/><circle cx="1013.7" cy="636.4" r=".62" fill="#111"/><circle cx="1011.3" cy="640.3" r=".62" fill="#111"/><circle cx="1013.6" cy="644.6" r=".62" fill="#111"/><circle cx="1011.7" cy="649.3" r=".62" fill="#111"/><circle cx="1015.6" cy="640.5" r=".62" fill="#111"/><g filter="url(#nzC)" opacity="1"><circle cx="1036.6" cy="640.9" r="14" fill="url(#fo)"/></g><g filter="url(#nzF3)" opacity="0.8"><circle cx="1036.6" cy="640.9" r="15" fill="#000"/></g><path d="M1047.1 654.2 h5 M1049.6 651.8 v5" stroke="#111" stroke-width="1.100"/><circle cx="910.0" cy="676.3" r="2.9" fill="#fff" stroke="#111" stroke-width=".95"/><circle cx="893.8" cy="675.9" r="2.4" fill="#fff" stroke="#111" stroke-width=".95"/><circle cx="899.2" cy="673.9" r="2.0" fill="#fff" stroke="#111" stroke-width=".95"/><circle cx="907.3" cy="684.6" r="1.9" fill="#fff" stroke="#111" stroke-width=".95"/><circle cx="896.9" cy="671.4" r="1.8" fill="#fff" stroke="#111" stroke-width=".95"/><circle cx="905.0" cy="670.2" r="2.0" fill="#fff" stroke="#111" stroke-width=".95"/><circle cx="896.9" cy="678.8" r="1.9" fill="#fff" stroke="#111" stroke-width=".95"/><circle cx="896.7" cy="683.1" r="2.6" fill="#fff" stroke="#111" stroke-width=".95"/><circle cx="902.6" cy="666.8" r="2.4" fill="#fff" stroke="#111" stroke-width=".95"/><circle cx="903.6" cy="674.8" r="2.0" fill="#fff" stroke="#111" stroke-width=".95"/><circle cx="902.3" cy="678.0" r="1.9" fill="#fff" stroke="#111" stroke-width=".95"/><circle cx="896.7" cy="664.4" r="2.7" fill="#fff" stroke="#111" stroke-width=".95"/><circle cx="900.6" cy="685.5" r="2.3" fill="#fff" stroke="#111" stroke-width=".95"/><circle cx="889.1" cy="676.2" r="2.6" fill="#fff" stroke="#111" stroke-width=".95"/><circle cx="890.6" cy="669.3" r="2.3" fill="#fff" stroke="#111" stroke-width=".95"/><circle cx="905.9" cy="680.2" r="2.0" fill="#fff" stroke="#111" stroke-width=".95"/><circle cx="912.0" cy="670.0" r="2.0" fill="#fff" stroke="#111" stroke-width=".95"/><circle cx="908.5" cy="668.3" r="1.8" fill="#fff" stroke="#111" stroke-width=".95"/><circle cx="900.4" cy="681.6" r="1.9" fill="#fff" stroke="#111" stroke-width=".95"/><circle cx="892.3" cy="680.2" r="1.9" fill="#fff" stroke="#111" stroke-width=".95"/><circle cx="906.1" cy="664.6" r="1.9" fill="#fff" stroke="#111" stroke-width=".95"/><circle cx="892.8" cy="666.1" r="2.1" fill="#fff" stroke="#111" stroke-width=".95"/><circle cx="893.7" cy="671.8" r="1.9" fill="#fff" stroke="#111" stroke-width=".95"/><circle cx="910.5" cy="681.0" r="2.2" fill="#fff" stroke="#111" stroke-width=".95"/><circle cx="908.4" cy="671.8" r="2.0" fill="#fff" stroke="#111" stroke-width=".95"/><circle cx="903.8" cy="683.4" r="2.1" fill="#fff" stroke="#111" stroke-width=".95"/><circle cx="899.2" cy="668.6" r="1.8" fill="#fff" stroke="#111" stroke-width=".95"/><circle cx="895.2" cy="668.6" r="2.0" fill="#fff" stroke="#111" stroke-width=".95"/><circle cx="901.0" cy="662.6" r="1.8" fill="#fff" stroke="#111" stroke-width=".95"/><circle cx="912.9" cy="673.3" r="1.9" fill="#fff" stroke="#111" stroke-width=".95"/><circle cx="901.7" cy="671.0" r="2.0" fill="#fff" stroke="#111" stroke-width=".95"/><circle cx="892.1" cy="683.3" r="1.9" fill="#fff" stroke="#111" stroke-width=".95"/><circle cx="888.6" cy="672.3" r="1.9" fill="#fff" stroke="#111" stroke-width=".95"/><path d="M911.1 688.0 h5 M913.6 685.5 v5" stroke="#111" stroke-width="1.100"/><g filter="url(#nzF1)" opacity="1"><circle cx="934.6" cy="674.6" r="15" fill="url(#fo)"/></g><g filter="url(#nzE)" opacity="0.6"><circle cx="934.6" cy="674.6" r="11" fill="#000"/></g><rect x="946.6" y="686.5" width="4" height="4.500" fill="#f58a8a"/><path d="M945.1 688.0 h5 M947.6 685.5 v5" stroke="#111" stroke-width="1.100"/><g filter="url(#nzC)" opacity="1"><circle cx="968.6" cy="674.6" r="14.500" fill="#000"/></g><g filter="url(#nzF2)" opacity="0.8"><circle cx="968.6" cy="674.6" r="14.500" fill="#000"/></g><rect x="980.6" y="686.5" width="4" height="4.500" fill="#f58a8a"/><path d="M979.1 688.0 h5 M981.6 685.5 v5" stroke="#111" stroke-width="1.100"/><circle cx="1002.6" cy="674.6" r="13.600" fill="url(#gSph)"/><g filter="url(#nzF3)" opacity="0.9"><circle cx="1002.6" cy="674.6" r="13.600" fill="#fff"/></g><g filter="url(#nzF2)" opacity="0.35"><circle cx="1002.6" cy="679.6" r="9" fill="#000"/></g><rect x="1014.6" y="686.5" width="4" height="4.500" fill="#f58a8a"/><path d="M1013.1 688.0 h5 M1015.6 685.5 v5" stroke="#111" stroke-width="1.100"/><g filter="url(#nzF1)" opacity="1"><path d="M1022.6 671.6 L1030.6 667.6 L1048.6 668.6 L1050.6 677.6 L1040.6 682.6 L1025.6 680.6 Z" fill="#000"/></g><g filter="url(#nzE)" opacity="0.7"><ellipse cx="1036.6" cy="674.6" rx="12" ry="6" fill="#000"/></g><path d="M1047.1 688.0 h5 M1049.6 685.5 v5" stroke="#111" stroke-width="1.100"/><g filter="url(#nzF1)" opacity="1"><rect x="886.6" y="700.4" width="25" height="16" rx="4" fill="#000"/></g><g filter="url(#nzE)" opacity="0.5"><rect x="888.6" y="702.4" width="21" height="12" rx="3" fill="#000"/></g><path d="M911.1 721.8 h5 M913.6 719.2 v5" stroke="#111" stroke-width="1.100"/><g filter="url(#bl05)"><rect x="925.1" y="698.2" width="7" height="2.400" rx="1.200" fill="#666" opacity=".8" transform="rotate(65 928.6 699.4)"/><rect x="933.1" y="700.2" width="7" height="2.400" rx="1.200" fill="#666" opacity=".8" transform="rotate(-50 936.6 701.4)"/><rect x="938.1" y="702.2" width="7" height="2.400" rx="1.200" fill="#666" opacity=".8" transform="rotate(5 941.6 703.4)"/><rect x="921.1" y="708.2" width="7" height="2.400" rx="1.200" fill="#666" opacity=".8" transform="rotate(-60 924.6 709.4)"/><rect x="927.1" y="707.2" width="7" height="2.400" rx="1.200" fill="#666" opacity=".8" transform="rotate(70 930.6 708.4)"/><rect x="934.1" y="708.2" width="7" height="2.400" rx="1.200" fill="#666" opacity=".8" transform="rotate(-5 937.6 709.4)"/><rect x="944.1" y="707.2" width="7" height="2.400" rx="1.200" fill="#666" opacity=".8" transform="rotate(75 947.6 708.4)"/><rect x="926.1" y="716.2" width="7" height="2.400" rx="1.200" fill="#666" opacity=".8" transform="rotate(20 929.6 717.4)"/><rect x="934.1" y="717.2" width="7" height="2.400" rx="1.200" fill="#666" opacity=".8" transform="rotate(-75 937.6 718.4)"/></g><g filter="url(#bl1)"><circle cx="962.6" cy="702.4" r="2" fill="#222" opacity=".75"/><circle cx="968.6" cy="699.4" r="1.5" fill="#222" opacity=".75"/><circle cx="973.6" cy="701.4" r="1.7" fill="#222" opacity=".75"/><circle cx="959.6" cy="708.4" r="1.6" fill="#222" opacity=".75"/><circle cx="965.6" cy="709.4" r="2.2" fill="#222" opacity=".75"/><circle cx="976.6" cy="710.4" r="2.4" fill="#222" opacity=".75"/><circle cx="971.6" cy="706.4" r="1.4" fill="#222" opacity=".75"/><circle cx="963.6" cy="715.4" r="1.8" fill="#222" opacity=".75"/><circle cx="970.6" cy="716.4" r="1.6" fill="#222" opacity=".75"/><circle cx="977.6" cy="704.4" r="1.2" fill="#222" opacity=".75"/><circle cx="967.6" cy="705.4" r="1.2" fill="#222" opacity=".75"/><circle cx="973.6" cy="714.4" r="1.2" fill="#222" opacity=".75"/></g><path d="M979.1 721.8 h5 M981.6 719.2 v5" stroke="#111" stroke-width="1.100"/><rect x="990.6" y="696.4" width="25" height="25" rx="5" fill="#000" opacity=".35" filter="url(#bl1)"/><g filter="url(#nzF1)" opacity="1"><rect x="988.6" y="694.4" width="29" height="29" rx="6" fill="url(#fo)"/></g><path d="M1013.1 721.8 h5 M1015.6 719.2 v5" stroke="#111" stroke-width="1.100"/><g filter="url(#nzF3)" opacity="1"><circle cx="1036.6" cy="708.4" r="16" fill="#000"/></g><g filter="url(#nzF2)" opacity="0.6"><circle cx="1036.6" cy="708.4" r="13" fill="url(#fo)"/></g><rect x="1048.6" y="720.2" width="4" height="4.500" fill="#f58a8a"/><path d="M1047.1 721.8 h5 M1049.6 719.2 v5" stroke="#111" stroke-width="1.100"/><g filter="url(#nzF1)" opacity="1"><circle cx="899.6" cy="742.1" r="12.500" fill="#000"/></g><circle cx="898.6" cy="743.1" r="8" fill="#000" opacity=".5" filter="url(#bl1)"/><path d="M911.1 755.5 h5 M913.6 753.0 v5" stroke="#111" stroke-width="1.100"/><g filter="url(#nzF3)" opacity="0.7"><circle cx="934.6" cy="742.1" r="15" fill="#000"/></g><path d="M927.6 733.1 q6 -3 8 3 q2 6 7 9" stroke="#222" stroke-width="5" fill="none" opacity=".55" filter="url(#bl1)"/><path d="M945.1 755.5 h5 M947.6 753.0 v5" stroke="#111" stroke-width="1.100"/><g filter="url(#nzF3)" opacity="1"><rect x="956.6" y="730.1" width="24" height="24" fill="#000"/></g><path d="M979.1 755.5 h5 M981.6 753.0 v5" stroke="#111" stroke-width="1.100"/><path d="M1000.6 733.1 q-3 6 0 10 q1 4 0 7" stroke="#555" stroke-width="4.500" fill="none" opacity=".8" filter="url(#bl1)"/><rect x="1014.6" y="754.0" width="4" height="4.500" fill="#f58a8a"/><path d="M1013.1 755.5 h5 M1015.6 753.0 v5" stroke="#111" stroke-width="1.100"/><path d="M1035.1 733.1 l.8 5 l-1.200 4 l1 7" stroke="#222" stroke-width="1.800" fill="none" stroke-dasharray="2.200 1.200"/><rect x="1048.6" y="754.0" width="4" height="4.500" fill="#f58a8a"/><path d="M1047.1 755.5 h5 M1049.6 753.0 v5" stroke="#111" stroke-width="1.100"/><path d="M891.6 765.9 l6 -4" stroke="#222" stroke-width="1.500"/><path d="M953.6 767.9 l4 -6 h22 l2 8z" fill="#777" opacity=".8" filter="url(#bl05)"/><ellipse cx="1002.6" cy="765.9" rx="9" ry="3" fill="#aaa" opacity=".6" filter="url(#bl1)"/><ellipse cx="1036.6" cy="767.9" rx="11" ry="5" fill="#f6b39a" filter="url(#bl1)"/></g></svg>
<div class="entry" style="left:883px;top:771px;width:190px;height:20px;border-radius:4px"></div>
<span class="t" id="br_basic" style="left:887.4px;top:773px;letter-spacing:-0.45px">Basic,</span>
<div class="a" style="left:1057px;top:778px;border-left:4px solid transparent;border-right:4px solid transparent;border-top:5px solid #66635f"></div>
<div class="a" style="left:882px;top:794px;width:192px;height:28px;border:1px solid #1a1a1a;background:#fff"></div>
<div class="a" style="left:884px;top:796px;width:9px;height:24px;background:#ef7645;border-radius:2px 0 0 2px"></div>
<span class="t" id="br_abst" style="left:885.3px;top:800px;font-size:11.6px;color:#222;letter-spacing:-0.64px">Abstand</span>
<span class="t" style="left:885px;top:800px;font-size:11.6px;color:#fff;width:8px;overflow:hidden">Abstand</span>
<span class="t" id="br_10" style="left:1000px;top:800px;width:56px;text-align:right;font-size:11.6px;color:#222">10,0</span>
<div class="ud" style="left:1062px;top:802px"></div>
<svg style="left:890px;top:827px" width="20" height="20" viewBox="0 0 20 20"><path d="M2 18 L4 13 L14.500 2.500 L18 6 L7.500 16.500 Z" fill="#3a3a3a" stroke="#111" stroke-width=".8"/><path d="M5 13.200 L15.200 3 L16.200 4" fill="none" stroke="#888" stroke-width="1"/><path d="M2 18 L4 13 L7.500 16.500 Z" fill="#e8d9a8" stroke="#7a6a3a" stroke-width=".6"/><path d="M2 18 L2.800 15.900 L4.200 17.300 Z" fill="#222"/><path d="M14.500 2.500 L16 1 Q17 .3 18 1.300 L19 2.300 Q19.800 3.300 19 4.500 L18 6 Z" fill="#e06aa8" stroke="#8a2a5a" stroke-width=".7"/></svg>
<svg style="left:930px;top:828px" width="18" height="18" viewBox="0 0 18 18"><path d="M2.500 1.500 H9.500 L13.500 5.500 V16.500 H2.500 Z" fill="#fafafa" stroke="#a3a5a0" stroke-width="1"/><path d="M9.500 1.500 V5.500 H13.500" fill="#e2e2e0" stroke="#a3a5a0" stroke-width=".8"/><path d="M12 10.500 h2.400 v2.300 h2.300 v2.400 h-2.300 v2.300 h-2.400 v-2.300 h-2.300 v-2.400 h2.300z" transform="translate(-1.200,-.6)" fill="#73c228" stroke="#3d8a0a" stroke-width=".9"/></svg>
<svg style="left:967px;top:828px" width="18" height="18" viewBox="0 0 18 18"><rect x="5.500" y="5.500" width="11" height="11" rx="1" fill="#eeeeec" stroke="#555" stroke-width="1"/><rect x="7.500" y="7.500" width="7" height="7" fill="#3b69ad"/><rect x="1.500" y="1.500" width="11" height="11" rx="1" fill="#eeeeec" stroke="#555" stroke-width="1"/><rect x="3.500" y="3.500" width="7" height="7" fill="#30527f"/><path d="M4 9.500 l2 -2.500 l1.500 1.500 l1 -1 l1.500 2z" fill="#c9d6e8"/></svg>
<svg style="left:1005px;top:828px" width="18" height="18" viewBox="0 0 20 20"><circle cx="10" cy="10" r="7" fill="none" stroke="#d0cdc8" stroke-width="3.200"/><path d="M5 5.500 L15 14.500" stroke="#d0cdc8" stroke-width="3"/></svg>
<svg style="left:1043px;top:827px" width="20" height="20" viewBox="0 0 20 20"><path d="M16 3 V8.500 H10.500" fill="none" stroke="#2d62ad" stroke-width="1"/><path d="M15.500 8 A6.500 6.500 0 1 0 16 13" fill="none" stroke="#2d62ad" stroke-width="4.600" stroke-linecap="butt"/><path d="M15.500 8 A6.500 6.500 0 1 0 16 13" fill="none" stroke="#5b93dc" stroke-width="2.800"/><path d="M17.500 2 V9.500 H10 Z" fill="#4a82cf" stroke="#2d62ad" stroke-width=".9" stroke-linejoin="round"/></svg>
<!-- Farben dropdown menu -->
<div class="a" style="left:353px;top:25px;width:198px;height:444px;background:#3c3b37;border:1px solid #2a2926;border-top:none;box-shadow:0 1px 2px rgba(0,0,0,.25)"></div>
<div class="a" style="left:354px;top:125px;width:196px;height:20px;background:linear-gradient(#f78c5c,#ef7441 50%,#e96a37);border-top:1px solid #d9683a;border-bottom:1px solid #c95a2e"></div>
<span class="m" id="mi0" style="left:379.2px;top:27px;color:#e4e0d8;letter-spacing:-0.21px">Farbabgleich …</span>
<span class="m" id="mi1" style="left:379.2px;top:47px;color:#e4e0d8;letter-spacing:-0.08px">Farbton / Sättigung …</span>
<span class="m" id="mi2" style="left:379.2px;top:67px;color:#e4e0d8;letter-spacing:-0.31px">Einfärben …</span>
<span class="m" id="mi3" style="left:379.2px;top:87px;color:#e4e0d8;letter-spacing:0.1px">Helligkeit / Kontrast …</span>
<span class="m" id="mi4" style="left:379.2px;top:107px;color:#e4e0d8;letter-spacing:-0.1px">Schwellwert …</span>
<span class="m" id="mi5" style="left:379.2px;top:127px;color:#ffffff;letter-spacing:-0.22px">Werte …</span>
<span class="m" id="mi6" style="left:379.2px;top:147px;color:#e4e0d8;letter-spacing:-0.5px">Kurven …</span>
<span class="m" id="mi7" style="left:379.2px;top:167px;color:#e4e0d8;letter-spacing:-0.07px">Posterisieren</span>
<span class="m" id="mi8" style="left:379.2px;top:187px;color:#e4e0d8;letter-spacing:-0.13px">Entsättigen …</span>
<span class="m" id="mi9" style="left:379.2px;top:215px;color:#e4e0d8;letter-spacing:0.08px">Invertieren</span>
<span class="m" id="mi10" style="left:379.2px;top:235px;color:#e4e0d8;letter-spacing:-0.06px">Wert umkehren</span>
<span class="m" id="mi11" style="left:379.2px;top:263px;color:#e4e0d8;letter-spacing:0.09px">Automatisch</span>
<span class="m" id="mi12" style="left:379.2px;top:283px;color:#e4e0d8;letter-spacing:0.0px">Komponenten</span>
<span class="m" id="mi13" style="left:379.2px;top:303px;color:#e4e0d8;letter-spacing:0.33px">Abbilden</span>
<span class="m" id="mi14" style="left:379.2px;top:323px;color:#e4e0d8;letter-spacing:0.31px">Information</span>
<span class="m" id="mi15" style="left:379.2px;top:351px;color:#e4e0d8;letter-spacing:-0.31px">Einfärben …</span>
<span class="m" id="mi16" style="left:379.2px;top:371px;color:#e4e0d8;letter-spacing:-0.45px">Farbe zu Transparenz …</span>
<span class="m" id="mi17" style="left:379.2px;top:391px;color:#e4e0d8;letter-spacing:0.08px">Filterpaket …</span>
<span class="m" id="mi18" style="left:379.2px;top:411px;color:#e4e0d8;letter-spacing:-0.57px">Heiß …</span>
<span class="m" id="mi19" style="left:379.2px;top:431px;color:#e4e0d8;letter-spacing:-0.52px">Maximales RGB …</span>
<span class="m" id="mi20" style="left:379.2px;top:451px;color:#e4e0d8;letter-spacing:-0.4px">Retinex …</span>
<div class="a" style="left:359px;top:208px;width:186px;height:1px;background:#2f2e2b"></div><div class="a" style="left:359px;top:209px;width:186px;height:1px;background:#46453f"></div>
<div class="a" style="left:359px;top:256px;width:186px;height:1px;background:#2f2e2b"></div><div class="a" style="left:359px;top:257px;width:186px;height:1px;background:#46453f"></div>
<div class="a" style="left:359px;top:344px;width:186px;height:1px;background:#2f2e2b"></div><div class="a" style="left:359px;top:345px;width:186px;height:1px;background:#46453f"></div>
<svg style="left:538px;top:266px" width="8" height="10" viewBox="0 0 8 10"><path d="M2 1.2 L6 5 L2 8.8" fill="none" stroke="#e4e0d8" stroke-width="1.5"/></svg>
<svg style="left:538px;top:286px" width="8" height="10" viewBox="0 0 8 10"><path d="M2 1.2 L6 5 L2 8.8" fill="none" stroke="#e4e0d8" stroke-width="1.5"/></svg>
<svg style="left:538px;top:306px" width="8" height="10" viewBox="0 0 8 10"><path d="M2 1.2 L6 5 L2 8.8" fill="none" stroke="#e4e0d8" stroke-width="1.5"/></svg>
<svg style="left:538px;top:326px" width="8" height="10" viewBox="0 0 8 10"><path d="M2 1.2 L6 5 L2 8.8" fill="none" stroke="#e4e0d8" stroke-width="1.5"/></svg>
<!-- window bottom edge -->
<div class="a" style="left:0;top:852px;width:1078px;height:1px;background:#dcdad6"></div>
<div class="a" style="left:0;top:853px;width:1078px;height:1px;background:#8d8a86"></div>
</body>
</html>
